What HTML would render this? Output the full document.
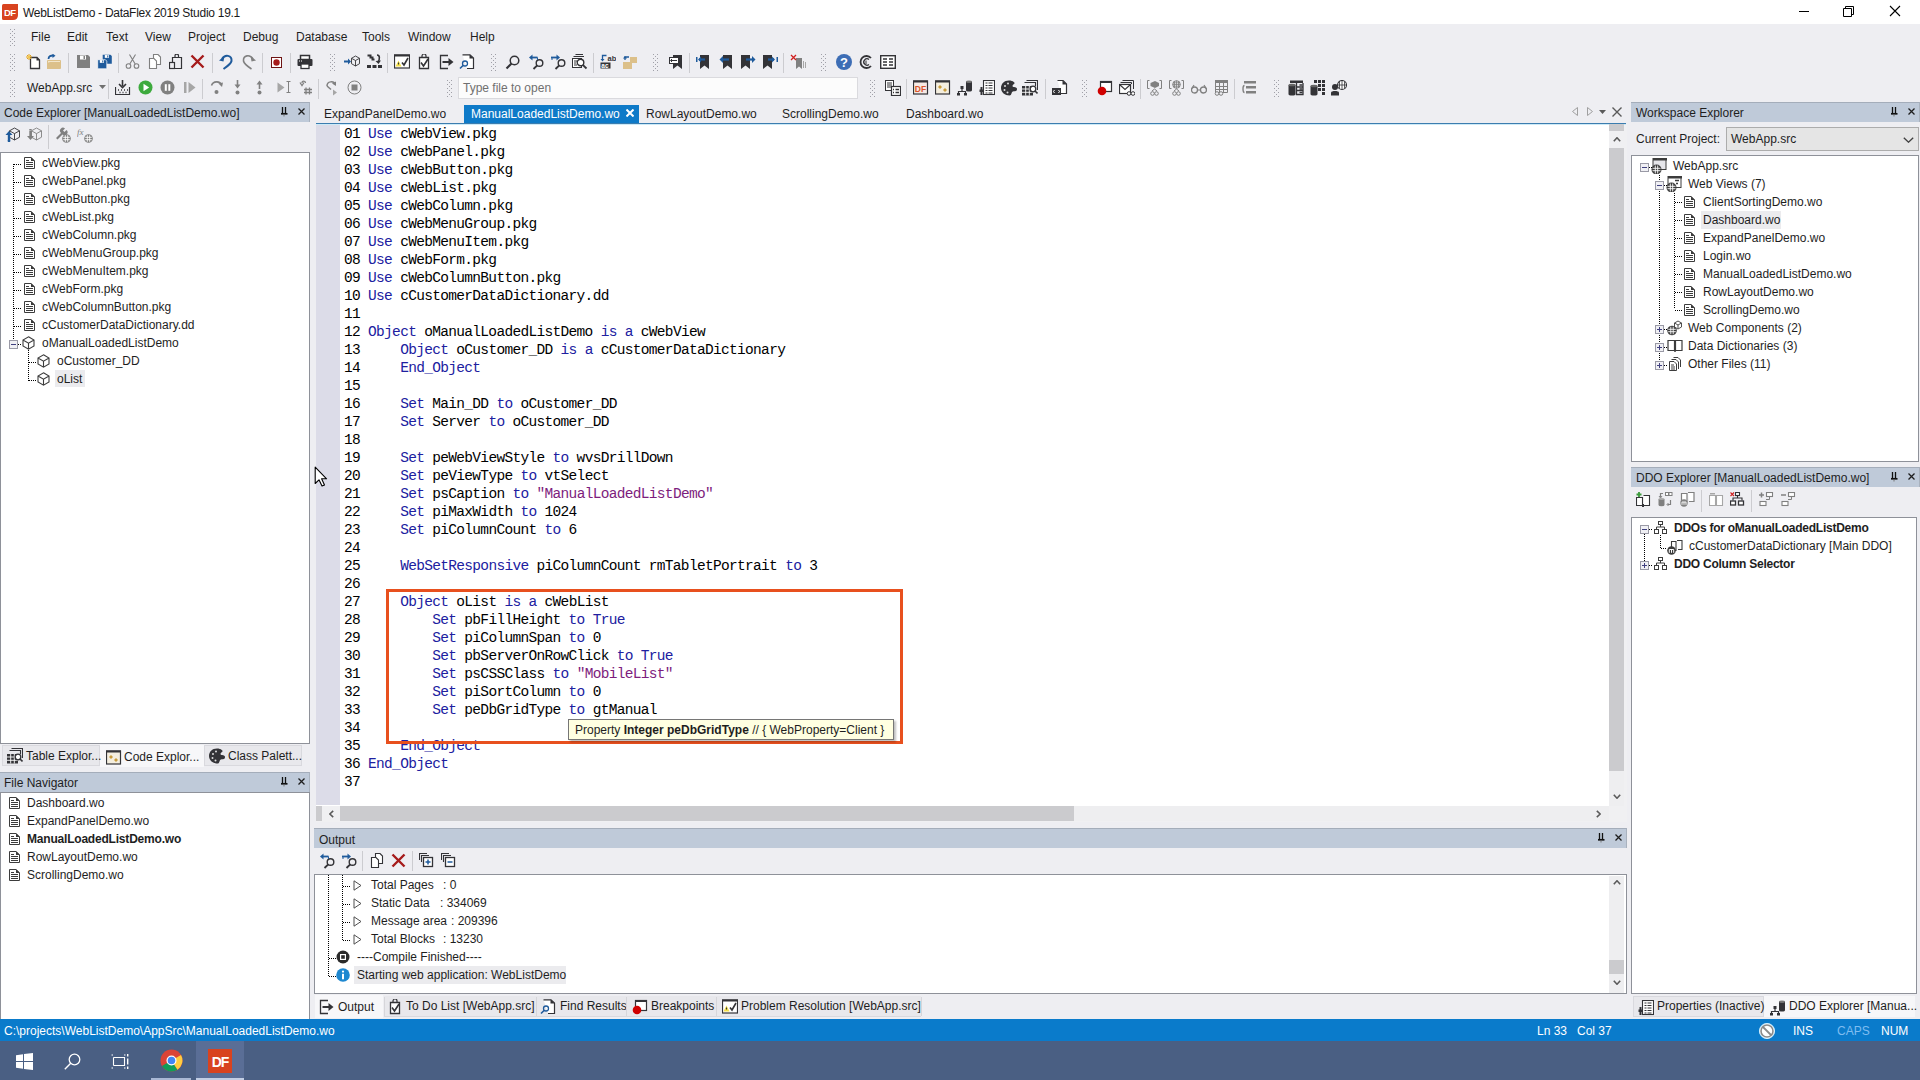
<!DOCTYPE html>
<html><head><meta charset="utf-8"><style>
*{margin:0;padding:0;box-sizing:border-box}
html,body{width:1920px;height:1080px;overflow:hidden;background:#EEEEF2;font-family:"Liberation Sans",sans-serif;font-size:12px;color:#1E1E1E}
.a{position:absolute}
.t{position:absolute;white-space:pre;line-height:14px;font-size:12px}
.hdr{position:absolute;background:#BFCAD9;border-top:1px solid #A4ADBA;border-right:1px solid #A9B2BE;height:20px}
.box{position:absolute;background:#fff;border:1px solid #8E9199}
.code{position:absolute;font-family:"Liberation Mono",monospace;font-size:14.5px;letter-spacing:-0.681px;line-height:18px;white-space:pre;color:#000}
b{font-weight:normal}
.k{color:#2020A0}
.s{color:#7D1D7D}
.bd{font-weight:bold}
</style></head><body>
<div class="a" style="left:0px;top:0px;width:1920px;height:24px;background:#fff;"></div>
<div class="t" style="left:23px;top:6px;color:#1a1a1a;letter-spacing:-0.28px">WebListDemo - DataFlex 2019 Studio 19.1</div>
<div class="a" style="left:1799px;top:11px;width:10px;height:1px;background:#000;"></div>
<svg class="a" style="left:1843px;top:5px;" width="12" height="12" viewBox="0 0 12 12"><path d="M0.5 3.5h8v8h-8z M2.5 3.5v-2h8v8h-2" fill="none" stroke="#000" stroke-width="1"/></svg>
<svg class="a" style="left:1889px;top:5px;" width="12" height="12" viewBox="0 0 12 12"><path d="M1 1L11 11M11 1L1 11" stroke="#000" stroke-width="1.1"/></svg>
<div class="t" style="left:31px;top:30px;color:#1E1E1E">File</div>
<div class="t" style="left:67px;top:30px;color:#1E1E1E">Edit</div>
<div class="t" style="left:106px;top:30px;color:#1E1E1E">Text</div>
<div class="t" style="left:145px;top:30px;color:#1E1E1E">View</div>
<div class="t" style="left:188px;top:30px;color:#1E1E1E">Project</div>
<div class="t" style="left:243px;top:30px;color:#1E1E1E">Debug</div>
<div class="t" style="left:296px;top:30px;color:#1E1E1E">Database</div>
<div class="t" style="left:362px;top:30px;color:#1E1E1E">Tools</div>
<div class="t" style="left:408px;top:30px;color:#1E1E1E">Window</div>
<div class="t" style="left:470px;top:30px;color:#1E1E1E">Help</div>
<div class="a" style="left:0px;top:1019px;width:1920px;height:22px;background:#0A7BCB;"></div>
<div class="t" style="left:4px;top:1024px;color:#fff">C:\projects\WebListDemo\AppSrc\ManualLoadedListDemo.wo</div>
<div class="t" style="left:1537px;top:1024px;color:#fff">Ln 33</div>
<div class="t" style="left:1577px;top:1024px;color:#fff">Col 37</div>
<div class="t" style="left:1793px;top:1024px;color:#fff">INS</div>
<div class="t" style="left:1837px;top:1024px;color:#7FBDF0">CAPS</div>
<div class="t" style="left:1881px;top:1024px;color:#fff">NUM</div>
<div class="a" style="left:0px;top:1041px;width:1920px;height:39px;background:#4A5F83;"></div>
<div class="hdr" style="left:0;top:102px;width:310px"></div>
<div class="t" style="left:4px;top:106px;">Code Explorer [ManualLoadedListDemo.wo]</div>
<div class="box" style="left:0;top:152px;width:310px;height:592px"></div>
<div class="t" style="left:42px;top:156px;">cWebView.pkg</div>
<div class="t" style="left:42px;top:174px;">cWebPanel.pkg</div>
<div class="t" style="left:42px;top:192px;">cWebButton.pkg</div>
<div class="t" style="left:42px;top:210px;">cWebList.pkg</div>
<div class="t" style="left:42px;top:228px;">cWebColumn.pkg</div>
<div class="t" style="left:42px;top:246px;">cWebMenuGroup.pkg</div>
<div class="t" style="left:42px;top:264px;">cWebMenuItem.pkg</div>
<div class="t" style="left:42px;top:282px;">cWebForm.pkg</div>
<div class="t" style="left:42px;top:300px;">cWebColumnButton.pkg</div>
<div class="t" style="left:42px;top:318px;">cCustomerDataDictionary.dd</div>
<div class="t" style="left:42px;top:336px;">oManualLoadedListDemo</div>
<div class="t" style="left:57px;top:354px;">oCustomer_DD</div>
<div class="a" style="left:55px;top:370px;width:30px;height:17px;background:#EBEBEE;"></div>
<div class="t" style="left:57px;top:372px;">oList</div>
<div class="a" style="left:2px;top:745px;width:98px;height:21px;background:#E8E8EC;border:1px solid #D9D9DE"></div>
<div class="a" style="left:100px;top:745px;width:104px;height:22px;background:#F7F7F9;"></div>
<div class="a" style="left:204px;top:745px;width:98px;height:21px;background:#E8E8EC;border:1px solid #D9D9DE"></div>
<div class="t" style="left:26px;top:749px;">Table Explor...</div>
<div class="t" style="left:124px;top:750px;">Code Explor...</div>
<div class="t" style="left:228px;top:749px;">Class Palett...</div>
<div class="hdr" style="left:0;top:772px;width:310px"></div>
<div class="t" style="left:4px;top:776px;">File Navigator</div>
<div class="box" style="left:0;top:792px;width:310px;height:227px;border-bottom:none"></div>
<div class="t" style="left:27px;top:796px;">Dashboard.wo</div>
<div class="t" style="left:27px;top:814px;">ExpandPanelDemo.wo</div>
<div class="t" style="left:27px;top:832px;font-weight:bold;letter-spacing:-0.2px">ManualLoadedListDemo.wo</div>
<div class="t" style="left:27px;top:850px;">RowLayoutDemo.wo</div>
<div class="t" style="left:27px;top:868px;">ScrollingDemo.wo</div>
<div class="t" style="left:324px;top:107px;">ExpandPanelDemo.wo</div>
<div class="a" style="left:464px;top:105px;width:175px;height:18px;background:#0E7AC8;"></div>
<div class="t" style="left:471px;top:107px;color:#fff">ManualLoadedListDemo.wo</div>
<div class="t" style="left:646px;top:107px;">RowLayoutDemo.wo</div>
<div class="t" style="left:782px;top:107px;">ScrollingDemo.wo</div>
<div class="t" style="left:906px;top:107px;">Dashboard.wo</div>
<div class="a" style="left:316px;top:123px;width:1310px;height:1px;background:#3C7DAF;"></div>
<div class="a" style="left:316px;top:124px;width:1293px;height:682px;background:#fff;"></div>
<div class="a" style="left:1624px;top:124px;width:3px;height:698px;background:#F0F0F2;"></div>
<div class="a" style="left:316px;top:124px;width:1310px;height:1px;background:#CDEAF7;"></div>
<div class="a" style="left:316px;top:125px;width:24px;height:680px;background:#DCDCE8;"></div>
<div class="code" style="left:344px;top:125px">01 <b class="k">Use</b> cWebView.pkg
02 <b class="k">Use</b> cWebPanel.pkg
03 <b class="k">Use</b> cWebButton.pkg
04 <b class="k">Use</b> cWebList.pkg
05 <b class="k">Use</b> cWebColumn.pkg
06 <b class="k">Use</b> cWebMenuGroup.pkg
07 <b class="k">Use</b> cWebMenuItem.pkg
08 <b class="k">Use</b> cWebForm.pkg
09 <b class="k">Use</b> cWebColumnButton.pkg
10 <b class="k">Use</b> cCustomerDataDictionary.dd
11
12 <b class="k">Object</b> oManualLoadedListDemo <b class="k">is</b> <b class="k">a</b> cWebView
13     <b class="k">Object</b> oCustomer_DD <b class="k">is</b> <b class="k">a</b> cCustomerDataDictionary
14     <b class="k">End_Object</b>
15
16     <b class="k">Set</b> Main_DD <b class="k">to</b> oCustomer_DD
17     <b class="k">Set</b> Server <b class="k">to</b> oCustomer_DD
18
19     <b class="k">Set</b> peWebViewStyle <b class="k">to</b> wvsDrillDown
20     <b class="k">Set</b> peViewType <b class="k">to</b> vtSelect
21     <b class="k">Set</b> psCaption <b class="k">to</b> <b class="s">"ManualLoadedListDemo"</b>
22     <b class="k">Set</b> piMaxWidth <b class="k">to</b> 1024
23     <b class="k">Set</b> piColumnCount <b class="k">to</b> 6
24
25     <b class="k">WebSetResponsive</b> piColumnCount rmTabletPortrait <b class="k">to</b> 3
26
27     <b class="k">Object</b> oList <b class="k">is</b> <b class="k">a</b> cWebList
28         <b class="k">Set</b> pbFillHeight <b class="k">to</b> <b class="k">True</b>
29         <b class="k">Set</b> piColumnSpan <b class="k">to</b> 0
30         <b class="k">Set</b> pbServerOnRowClick <b class="k">to</b> <b class="k">True</b>
31         <b class="k">Set</b> psCSSClass <b class="k">to</b> <b class="s">"MobileList"</b>
32         <b class="k">Set</b> piSortColumn <b class="k">to</b> 0
33         <b class="k">Set</b> peDbGridType <b class="k">to</b> gtManual
34
35     <b class="k">End_Object</b>
36 <b class="k">End_Object</b>
37
</div>
<div class="a" style="left:1609px;top:124px;width:15px;height:682px;background:#EEEEF0;"></div>
<div class="a" style="left:1609px;top:148px;width:15px;height:623px;background:#CBCBCE;"></div>
<div class="a" style="left:1609px;top:124px;width:15px;height:7px;background:#CBCBCE;"></div>
<div class="a" style="left:1609px;top:131px;width:15px;height:17px;background:#F0F0F2;"></div>
<div class="a" style="left:316px;top:806px;width:1311px;height:16px;background:#F0F0F2;"></div>
<div class="a" style="left:340px;top:806px;width:1269px;height:15px;background:#EEEEF0;"></div>
<div class="a" style="left:340px;top:806px;width:734px;height:15px;background:#CBCBCE;"></div>
<div class="a" style="left:316px;top:806px;width:24px;height:15px;background:#F0F0F2;"></div>
<div class="a" style="left:316px;top:806px;width:6px;height:15px;background:#CBCBCE;"></div>
<div class="a" style="left:386px;top:589px;width:517px;height:155px;border:3px solid #E8501E"></div>
<div class="a" style="left:568px;top:719px;width:326px;height:21px;background:#FFFFE1;border:1px solid #767676;box-shadow:2px 2px 2px rgba(0,0,0,0.25)"></div>
<div class="t" style="left:575px;top:723px;">Property <span class="bd">Integer peDbGridType</span> // { WebProperty=Client }</div>
<div class="hdr" style="left:314px;top:828px;width:1313px"></div>
<div class="t" style="left:319px;top:833px;">Output</div>
<div class="box" style="left:314px;top:874px;width:1313px;height:120px"></div>
<div class="t" style="left:371px;top:878px;">Total Pages</div>
<div class="t" style="left:443px;top:878px;">: 0</div>
<div class="t" style="left:371px;top:896px;">Static Data</div>
<div class="t" style="left:440px;top:896px;">: 334069</div>
<div class="t" style="left:371px;top:914px;">Message area</div>
<div class="t" style="left:451px;top:914px;">: 209396</div>
<div class="t" style="left:371px;top:932px;">Total Blocks</div>
<div class="t" style="left:443px;top:932px;">: 13230</div>
<div class="t" style="left:357px;top:950px;">----Compile Finished----</div>
<div class="a" style="left:354px;top:966px;width:212px;height:18px;background:#EBEBEE;"></div>
<div class="t" style="left:357px;top:968px;">Starting web application: WebListDemo</div>
<div class="a" style="left:1609px;top:876px;width:15px;height:117px;background:#EEEEF0;"></div>
<div class="a" style="left:1609px;top:960px;width:15px;height:14px;background:#CBCBCE;"></div>
<div class="a" style="left:315px;top:995px;width:68px;height:23px;background:#F7F7F9;"></div>
<div class="a" style="left:384px;top:996px;width:152px;height:21px;background:#E8E8EC;border-bottom:1px solid #D9D9DE"></div>
<div class="a" style="left:536px;top:996px;width:90px;height:21px;background:#E8E8EC;border-bottom:1px solid #D9D9DE"></div>
<div class="a" style="left:626px;top:996px;width:90px;height:21px;background:#E8E8EC;border-bottom:1px solid #D9D9DE"></div>
<div class="a" style="left:716px;top:996px;width:205px;height:21px;background:#E8E8EC;border-bottom:1px solid #D9D9DE"></div>
<div class="t" style="left:338px;top:1000px;">Output</div>
<div class="t" style="left:406px;top:999px;">To Do List [WebApp.src]</div>
<div class="t" style="left:560px;top:999px;">Find Results</div>
<div class="t" style="left:651px;top:999px;">Breakpoints</div>
<div class="t" style="left:741px;top:999px;">Problem Resolution [WebApp.src]</div>
<div class="hdr" style="left:1631px;top:102px;width:289px"></div>
<div class="t" style="left:1636px;top:106px;">Workspace Explorer</div>
<div class="t" style="left:1636px;top:132px;">Current Project:</div>
<div class="a" style="left:1726px;top:127px;width:193px;height:24px;background:#E5E5E5;border:1px solid #ACACAC"></div>
<div class="t" style="left:1731px;top:132px;">WebApp.src</div>
<div class="box" style="left:1631px;top:155px;width:288px;height:307px"></div>
<div class="t" style="left:1673px;top:159px;">WebApp.src</div>
<div class="t" style="left:1688px;top:177px;">Web Views (7)</div>
<div class="t" style="left:1703px;top:195px;">ClientSortingDemo.wo</div>
<div class="a" style="left:1701px;top:211px;width:80px;height:18px;background:#EBEBEE;"></div>
<div class="t" style="left:1703px;top:213px;">Dashboard.wo</div>
<div class="t" style="left:1703px;top:231px;">ExpandPanelDemo.wo</div>
<div class="t" style="left:1703px;top:249px;">Login.wo</div>
<div class="t" style="left:1703px;top:267px;">ManualLoadedListDemo.wo</div>
<div class="t" style="left:1703px;top:285px;">RowLayoutDemo.wo</div>
<div class="t" style="left:1703px;top:303px;">ScrollingDemo.wo</div>
<div class="t" style="left:1688px;top:321px;">Web Components (2)</div>
<div class="t" style="left:1688px;top:339px;">Data Dictionaries (3)</div>
<div class="t" style="left:1688px;top:357px;">Other Files (11)</div>
<div class="hdr" style="left:1631px;top:467px;width:289px"></div>
<div class="t" style="left:1636px;top:471px;">DDO Explorer [ManualLoadedListDemo.wo]</div>
<div class="box" style="left:1631px;top:517px;width:286px;height:477px"></div>
<div class="t" style="left:1674px;top:521px;font-weight:bold;letter-spacing:-0.25px">DDOs for oManualLoadedListDemo</div>
<div class="t" style="left:1689px;top:539px;">cCustomerDataDictionary [Main DDO]</div>
<div class="t" style="left:1674px;top:557px;font-weight:bold;letter-spacing:-0.25px">DDO Column Selector</div>
<div class="a" style="left:1633px;top:996px;width:131px;height:21px;background:#E8E8EC;border:1px solid #D9D9DE"></div>
<div class="a" style="left:1764px;top:996px;width:151px;height:21px;background:#F7F7F9;"></div>
<div class="t" style="left:1657px;top:999px;">Properties (Inactive)</div>
<div class="t" style="left:1789px;top:999px;">DDO Explorer [Manua...</div>
<svg class="a" style="left:13px;top:164px;" width="1" height="177" viewBox="0 0 1 177"><path d="M0.5 0V177" stroke="#000" stroke-dasharray="1 1"/></svg>
<svg class="a" style="left:14px;top:164px;" width="7" height="1" viewBox="0 0 7 1"><path d="M0 0.5H7" stroke="#000" stroke-dasharray="1 1"/></svg>
<svg class="a" style="left:24px;top:157px;" width="11" height="12" viewBox="0 0 11 12"><path d="M0.5 0.5H7L10.5 4V11.5H0.5Z" fill="#fff" stroke="#3C3C3C"/><path d="M7 0L11 4H7Z" fill="#3C3C3C"/><path d="M2 3.5h3M2 5.5h7M2 7.5h7M2 9.5h7" stroke="#3C3C3C"/></svg>
<svg class="a" style="left:14px;top:182px;" width="7" height="1" viewBox="0 0 7 1"><path d="M0 0.5H7" stroke="#000" stroke-dasharray="1 1"/></svg>
<svg class="a" style="left:24px;top:175px;" width="11" height="12" viewBox="0 0 11 12"><path d="M0.5 0.5H7L10.5 4V11.5H0.5Z" fill="#fff" stroke="#3C3C3C"/><path d="M7 0L11 4H7Z" fill="#3C3C3C"/><path d="M2 3.5h3M2 5.5h7M2 7.5h7M2 9.5h7" stroke="#3C3C3C"/></svg>
<svg class="a" style="left:14px;top:200px;" width="7" height="1" viewBox="0 0 7 1"><path d="M0 0.5H7" stroke="#000" stroke-dasharray="1 1"/></svg>
<svg class="a" style="left:24px;top:193px;" width="11" height="12" viewBox="0 0 11 12"><path d="M0.5 0.5H7L10.5 4V11.5H0.5Z" fill="#fff" stroke="#3C3C3C"/><path d="M7 0L11 4H7Z" fill="#3C3C3C"/><path d="M2 3.5h3M2 5.5h7M2 7.5h7M2 9.5h7" stroke="#3C3C3C"/></svg>
<svg class="a" style="left:14px;top:218px;" width="7" height="1" viewBox="0 0 7 1"><path d="M0 0.5H7" stroke="#000" stroke-dasharray="1 1"/></svg>
<svg class="a" style="left:24px;top:211px;" width="11" height="12" viewBox="0 0 11 12"><path d="M0.5 0.5H7L10.5 4V11.5H0.5Z" fill="#fff" stroke="#3C3C3C"/><path d="M7 0L11 4H7Z" fill="#3C3C3C"/><path d="M2 3.5h3M2 5.5h7M2 7.5h7M2 9.5h7" stroke="#3C3C3C"/></svg>
<svg class="a" style="left:14px;top:236px;" width="7" height="1" viewBox="0 0 7 1"><path d="M0 0.5H7" stroke="#000" stroke-dasharray="1 1"/></svg>
<svg class="a" style="left:24px;top:229px;" width="11" height="12" viewBox="0 0 11 12"><path d="M0.5 0.5H7L10.5 4V11.5H0.5Z" fill="#fff" stroke="#3C3C3C"/><path d="M7 0L11 4H7Z" fill="#3C3C3C"/><path d="M2 3.5h3M2 5.5h7M2 7.5h7M2 9.5h7" stroke="#3C3C3C"/></svg>
<svg class="a" style="left:14px;top:254px;" width="7" height="1" viewBox="0 0 7 1"><path d="M0 0.5H7" stroke="#000" stroke-dasharray="1 1"/></svg>
<svg class="a" style="left:24px;top:247px;" width="11" height="12" viewBox="0 0 11 12"><path d="M0.5 0.5H7L10.5 4V11.5H0.5Z" fill="#fff" stroke="#3C3C3C"/><path d="M7 0L11 4H7Z" fill="#3C3C3C"/><path d="M2 3.5h3M2 5.5h7M2 7.5h7M2 9.5h7" stroke="#3C3C3C"/></svg>
<svg class="a" style="left:14px;top:272px;" width="7" height="1" viewBox="0 0 7 1"><path d="M0 0.5H7" stroke="#000" stroke-dasharray="1 1"/></svg>
<svg class="a" style="left:24px;top:265px;" width="11" height="12" viewBox="0 0 11 12"><path d="M0.5 0.5H7L10.5 4V11.5H0.5Z" fill="#fff" stroke="#3C3C3C"/><path d="M7 0L11 4H7Z" fill="#3C3C3C"/><path d="M2 3.5h3M2 5.5h7M2 7.5h7M2 9.5h7" stroke="#3C3C3C"/></svg>
<svg class="a" style="left:14px;top:290px;" width="7" height="1" viewBox="0 0 7 1"><path d="M0 0.5H7" stroke="#000" stroke-dasharray="1 1"/></svg>
<svg class="a" style="left:24px;top:283px;" width="11" height="12" viewBox="0 0 11 12"><path d="M0.5 0.5H7L10.5 4V11.5H0.5Z" fill="#fff" stroke="#3C3C3C"/><path d="M7 0L11 4H7Z" fill="#3C3C3C"/><path d="M2 3.5h3M2 5.5h7M2 7.5h7M2 9.5h7" stroke="#3C3C3C"/></svg>
<svg class="a" style="left:14px;top:308px;" width="7" height="1" viewBox="0 0 7 1"><path d="M0 0.5H7" stroke="#000" stroke-dasharray="1 1"/></svg>
<svg class="a" style="left:24px;top:301px;" width="11" height="12" viewBox="0 0 11 12"><path d="M0.5 0.5H7L10.5 4V11.5H0.5Z" fill="#fff" stroke="#3C3C3C"/><path d="M7 0L11 4H7Z" fill="#3C3C3C"/><path d="M2 3.5h3M2 5.5h7M2 7.5h7M2 9.5h7" stroke="#3C3C3C"/></svg>
<svg class="a" style="left:14px;top:326px;" width="7" height="1" viewBox="0 0 7 1"><path d="M0 0.5H7" stroke="#000" stroke-dasharray="1 1"/></svg>
<svg class="a" style="left:24px;top:319px;" width="11" height="12" viewBox="0 0 11 12"><path d="M0.5 0.5H7L10.5 4V11.5H0.5Z" fill="#fff" stroke="#3C3C3C"/><path d="M7 0L11 4H7Z" fill="#3C3C3C"/><path d="M2 3.5h3M2 5.5h7M2 7.5h7M2 9.5h7" stroke="#3C3C3C"/></svg>
<svg class="a" style="left:9px;top:340px;" width="9" height="9" viewBox="0 0 9 9"><rect x="0.5" y="0.5" width="8" height="8" fill="#F0F0F4" stroke="#9A9AA6"/><path d="M2 4.5h5" stroke="#404080"/></svg>
<svg class="a" style="left:18px;top:344px;" width="4" height="1" viewBox="0 0 4 1"><path d="M0 0.5H4" stroke="#000" stroke-dasharray="1 1"/></svg>
<svg class="a" style="left:22px;top:336px;" width="13" height="14" viewBox="0 0 13 14"><path d="M6.5 0.8L12 4V10L6.5 13.2L1 10V4Z M1 4L6.5 7.2L12 4 M6.5 7.2V13.2" fill="none" stroke="#3C3C3C" stroke-width="1.1"/></svg>
<svg class="a" style="left:28px;top:350px;" width="1" height="31" viewBox="0 0 1 31"><path d="M0.5 0V31" stroke="#000" stroke-dasharray="1 1"/></svg>
<svg class="a" style="left:29px;top:362px;" width="7" height="1" viewBox="0 0 7 1"><path d="M0 0.5H7" stroke="#000" stroke-dasharray="1 1"/></svg>
<svg class="a" style="left:29px;top:380px;" width="7" height="1" viewBox="0 0 7 1"><path d="M0 0.5H7" stroke="#000" stroke-dasharray="1 1"/></svg>
<svg class="a" style="left:37px;top:354px;" width="13" height="14" viewBox="0 0 13 14"><path d="M6.5 0.8L12 4V10L6.5 13.2L1 10V4Z M1 4L6.5 7.2L12 4 M6.5 7.2V13.2" fill="none" stroke="#3C3C3C" stroke-width="1.1"/></svg>
<svg class="a" style="left:37px;top:372px;" width="13" height="14" viewBox="0 0 13 14"><path d="M6.5 0.8L12 4V10L6.5 13.2L1 10V4Z M1 4L6.5 7.2L12 4 M6.5 7.2V13.2" fill="none" stroke="#3C3C3C" stroke-width="1.1"/></svg>
<svg class="a" style="left:9px;top:797px;" width="11" height="12" viewBox="0 0 11 12"><path d="M0.5 0.5H7L10.5 4V11.5H0.5Z" fill="#fff" stroke="#3C3C3C"/><path d="M7 0L11 4H7Z" fill="#3C3C3C"/><path d="M2 3.5h3M2 5.5h7M2 7.5h7M2 9.5h7" stroke="#3C3C3C"/></svg>
<svg class="a" style="left:9px;top:815px;" width="11" height="12" viewBox="0 0 11 12"><path d="M0.5 0.5H7L10.5 4V11.5H0.5Z" fill="#fff" stroke="#3C3C3C"/><path d="M7 0L11 4H7Z" fill="#3C3C3C"/><path d="M2 3.5h3M2 5.5h7M2 7.5h7M2 9.5h7" stroke="#3C3C3C"/></svg>
<svg class="a" style="left:9px;top:833px;" width="11" height="12" viewBox="0 0 11 12"><path d="M0.5 0.5H7L10.5 4V11.5H0.5Z" fill="#fff" stroke="#3C3C3C"/><path d="M7 0L11 4H7Z" fill="#3C3C3C"/><path d="M2 3.5h3M2 5.5h7M2 7.5h7M2 9.5h7" stroke="#3C3C3C"/></svg>
<svg class="a" style="left:9px;top:851px;" width="11" height="12" viewBox="0 0 11 12"><path d="M0.5 0.5H7L10.5 4V11.5H0.5Z" fill="#fff" stroke="#3C3C3C"/><path d="M7 0L11 4H7Z" fill="#3C3C3C"/><path d="M2 3.5h3M2 5.5h7M2 7.5h7M2 9.5h7" stroke="#3C3C3C"/></svg>
<svg class="a" style="left:9px;top:869px;" width="11" height="12" viewBox="0 0 11 12"><path d="M0.5 0.5H7L10.5 4V11.5H0.5Z" fill="#fff" stroke="#3C3C3C"/><path d="M7 0L11 4H7Z" fill="#3C3C3C"/><path d="M2 3.5h3M2 5.5h7M2 7.5h7M2 9.5h7" stroke="#3C3C3C"/></svg>
<svg class="a" style="left:1640px;top:163px;" width="9" height="9" viewBox="0 0 9 9"><rect x="0.5" y="0.5" width="8" height="8" fill="#F0F0F4" stroke="#9A9AA6"/><path d="M2 4.5h5" stroke="#404080"/></svg>
<svg class="a" style="left:1649px;top:167px;" width="3" height="1" viewBox="0 0 3 1"><path d="M0 0.5H3" stroke="#000" stroke-dasharray="1 1"/></svg>
<svg class="a" style="left:1651px;top:158px;" width="16" height="16" viewBox="0 0 16 16"><rect x="2" y="0.5" width="13" height="11" fill="#E6E6EA" stroke="#3C3C3C"/><rect x="2" y="0" width="14" height="2.5" fill="#3C3C3C"/><circle cx="5.5" cy="11.5" r="5" fill="#3C3C3C"/><path d="M1.5 10.3h8M1.5 12.7h8M4.3 7.5v8M6.7 7.5v8" stroke="#fff" stroke-width="0.9"/></svg>
<svg class="a" style="left:1659px;top:175px;" width="1" height="187" viewBox="0 0 1 187"><path d="M0.5 0V187" stroke="#000" stroke-dasharray="1 1"/></svg>
<svg class="a" style="left:1655px;top:181px;" width="9" height="9" viewBox="0 0 9 9"><rect x="0.5" y="0.5" width="8" height="8" fill="#F0F0F4" stroke="#9A9AA6"/><path d="M2 4.5h5" stroke="#404080"/></svg>
<svg class="a" style="left:1664px;top:185px;" width="3" height="1" viewBox="0 0 3 1"><path d="M0 0.5H3" stroke="#000" stroke-dasharray="1 1"/></svg>
<svg class="a" style="left:1666px;top:176px;" width="16" height="16" viewBox="0 0 16 16"><rect x="2" y="0.5" width="13" height="11" fill="#fff" stroke="#3C3C3C"/><rect x="2" y="0" width="14" height="2.5" fill="#3C3C3C"/><path d="M9 4.5h4M10 7.5h2" stroke="#3C3C3C" stroke-width="1.4"/><circle cx="5.5" cy="11.5" r="5" fill="#3C3C3C"/><path d="M1.5 10.3h8M1.5 12.7h8M4.3 7.5v8M6.7 7.5v8" stroke="#fff" stroke-width="0.9"/></svg>
<svg class="a" style="left:1674px;top:193px;" width="1" height="116" viewBox="0 0 1 116"><path d="M0.5 0V116" stroke="#000" stroke-dasharray="1 1"/></svg>
<svg class="a" style="left:1675px;top:202px;" width="7" height="1" viewBox="0 0 7 1"><path d="M0 0.5H7" stroke="#000" stroke-dasharray="1 1"/></svg>
<svg class="a" style="left:1684px;top:196px;" width="11" height="12" viewBox="0 0 11 12"><path d="M0.5 0.5H7L10.5 4V11.5H0.5Z" fill="#fff" stroke="#3C3C3C"/><path d="M7 0L11 4H7Z" fill="#3C3C3C"/><path d="M2 3.5h3M2 5.5h7M2 7.5h7M2 9.5h7" stroke="#3C3C3C"/></svg>
<svg class="a" style="left:1675px;top:220px;" width="7" height="1" viewBox="0 0 7 1"><path d="M0 0.5H7" stroke="#000" stroke-dasharray="1 1"/></svg>
<svg class="a" style="left:1684px;top:214px;" width="11" height="12" viewBox="0 0 11 12"><path d="M0.5 0.5H7L10.5 4V11.5H0.5Z" fill="#fff" stroke="#3C3C3C"/><path d="M7 0L11 4H7Z" fill="#3C3C3C"/><path d="M2 3.5h3M2 5.5h7M2 7.5h7M2 9.5h7" stroke="#3C3C3C"/></svg>
<svg class="a" style="left:1675px;top:238px;" width="7" height="1" viewBox="0 0 7 1"><path d="M0 0.5H7" stroke="#000" stroke-dasharray="1 1"/></svg>
<svg class="a" style="left:1684px;top:232px;" width="11" height="12" viewBox="0 0 11 12"><path d="M0.5 0.5H7L10.5 4V11.5H0.5Z" fill="#fff" stroke="#3C3C3C"/><path d="M7 0L11 4H7Z" fill="#3C3C3C"/><path d="M2 3.5h3M2 5.5h7M2 7.5h7M2 9.5h7" stroke="#3C3C3C"/></svg>
<svg class="a" style="left:1675px;top:256px;" width="7" height="1" viewBox="0 0 7 1"><path d="M0 0.5H7" stroke="#000" stroke-dasharray="1 1"/></svg>
<svg class="a" style="left:1684px;top:250px;" width="11" height="12" viewBox="0 0 11 12"><path d="M0.5 0.5H7L10.5 4V11.5H0.5Z" fill="#fff" stroke="#3C3C3C"/><path d="M7 0L11 4H7Z" fill="#3C3C3C"/><path d="M2 3.5h3M2 5.5h7M2 7.5h7M2 9.5h7" stroke="#3C3C3C"/></svg>
<svg class="a" style="left:1675px;top:274px;" width="7" height="1" viewBox="0 0 7 1"><path d="M0 0.5H7" stroke="#000" stroke-dasharray="1 1"/></svg>
<svg class="a" style="left:1684px;top:268px;" width="11" height="12" viewBox="0 0 11 12"><path d="M0.5 0.5H7L10.5 4V11.5H0.5Z" fill="#fff" stroke="#3C3C3C"/><path d="M7 0L11 4H7Z" fill="#3C3C3C"/><path d="M2 3.5h3M2 5.5h7M2 7.5h7M2 9.5h7" stroke="#3C3C3C"/></svg>
<svg class="a" style="left:1675px;top:292px;" width="7" height="1" viewBox="0 0 7 1"><path d="M0 0.5H7" stroke="#000" stroke-dasharray="1 1"/></svg>
<svg class="a" style="left:1684px;top:286px;" width="11" height="12" viewBox="0 0 11 12"><path d="M0.5 0.5H7L10.5 4V11.5H0.5Z" fill="#fff" stroke="#3C3C3C"/><path d="M7 0L11 4H7Z" fill="#3C3C3C"/><path d="M2 3.5h3M2 5.5h7M2 7.5h7M2 9.5h7" stroke="#3C3C3C"/></svg>
<svg class="a" style="left:1675px;top:310px;" width="7" height="1" viewBox="0 0 7 1"><path d="M0 0.5H7" stroke="#000" stroke-dasharray="1 1"/></svg>
<svg class="a" style="left:1684px;top:304px;" width="11" height="12" viewBox="0 0 11 12"><path d="M0.5 0.5H7L10.5 4V11.5H0.5Z" fill="#fff" stroke="#3C3C3C"/><path d="M7 0L11 4H7Z" fill="#3C3C3C"/><path d="M2 3.5h3M2 5.5h7M2 7.5h7M2 9.5h7" stroke="#3C3C3C"/></svg>
<svg class="a" style="left:1655px;top:325px;" width="9" height="9" viewBox="0 0 9 9"><rect x="0.5" y="0.5" width="8" height="8" fill="#F0F0F4" stroke="#9A9AA6"/><path d="M2 4.5h5" stroke="#404080"/><path d="M4.5 2v5" stroke="#404080"/></svg>
<svg class="a" style="left:1664px;top:329px;" width="3" height="1" viewBox="0 0 3 1"><path d="M0 0.5H3" stroke="#000" stroke-dasharray="1 1"/></svg>
<svg class="a" style="left:1655px;top:343px;" width="9" height="9" viewBox="0 0 9 9"><rect x="0.5" y="0.5" width="8" height="8" fill="#F0F0F4" stroke="#9A9AA6"/><path d="M2 4.5h5" stroke="#404080"/><path d="M4.5 2v5" stroke="#404080"/></svg>
<svg class="a" style="left:1664px;top:347px;" width="3" height="1" viewBox="0 0 3 1"><path d="M0 0.5H3" stroke="#000" stroke-dasharray="1 1"/></svg>
<svg class="a" style="left:1655px;top:361px;" width="9" height="9" viewBox="0 0 9 9"><rect x="0.5" y="0.5" width="8" height="8" fill="#F0F0F4" stroke="#9A9AA6"/><path d="M2 4.5h5" stroke="#404080"/><path d="M4.5 2v5" stroke="#404080"/></svg>
<svg class="a" style="left:1664px;top:365px;" width="3" height="1" viewBox="0 0 3 1"><path d="M0 0.5H3" stroke="#000" stroke-dasharray="1 1"/></svg>
<svg class="a" style="left:1667px;top:320px;" width="16" height="16" viewBox="0 0 16 16"><circle cx="5" cy="10.5" r="4.8" fill="#3C3C3C"/><path d="M1.2000000000000002 9.3h7.6M1.2000000000000002 11.7h7.6M3.8 6.7v7.6M6.2 6.7v7.6" stroke="#fff" stroke-width="0.9"/><path d="M11 1L14.5 3V7L11 9L7.5 7V3Z M11 5V8.5 M7.5 3L11 5L14.5 3" fill="#fff" stroke="#3C3C3C" stroke-width="0.9"/></svg>
<svg class="a" style="left:1667px;top:339px;" width="16" height="14" viewBox="0 0 16 14"><path d="M1 1.5H7.5V11.5H1Z M8.5 1.5H15V11.5H8.5Z" fill="#fff" stroke="#3C3C3C" stroke-width="1.2"/><path d="M8 1v12" stroke="#3C3C3C" stroke-width="1.5"/></svg>
<svg class="a" style="left:1669px;top:357px;" width="12" height="14" viewBox="0 0 12 14"><path d="M4.5 0.5H9L11.5 3V10" fill="none" stroke="#3C3C3C"/><path d="M2.5 2.5H7L9.5 5V12" fill="none" stroke="#3C3C3C"/><path d="M0.5 4.5H5L7.5 7V13.5H0.5Z" fill="#fff" stroke="#3C3C3C"/><path d="M2 8h3M2 10h4M2 12h4" stroke="#3C3C3C"/></svg>
<svg class="a" style="left:1640px;top:525px;" width="9" height="9" viewBox="0 0 9 9"><rect x="0.5" y="0.5" width="8" height="8" fill="#F0F0F4" stroke="#9A9AA6"/><path d="M2 4.5h5" stroke="#404080"/></svg>
<svg class="a" style="left:1649px;top:529px;" width="3" height="1" viewBox="0 0 3 1"><path d="M0 0.5H3" stroke="#000" stroke-dasharray="1 1"/></svg>
<svg class="a" style="left:1654px;top:521px;" width="13" height="13" viewBox="0 0 13 13"><rect x="4.5" y="0.5" width="4" height="3" fill="#fff" stroke="#3C3C3C"/><path d="M6.5 3.5V6M2.5 8V6H10.5V8" fill="none" stroke="#3C3C3C"/><rect x="0.5" y="8.5" width="4" height="4" fill="#fff" stroke="#3C3C3C"/><rect x="8.5" y="8.5" width="4" height="4" fill="#fff" stroke="#3C3C3C"/></svg>
<svg class="a" style="left:1644px;top:534px;" width="1" height="27" viewBox="0 0 1 27"><path d="M0.5 0V27" stroke="#000" stroke-dasharray="1 1"/></svg>
<svg class="a" style="left:1660px;top:535px;" width="1" height="13" viewBox="0 0 1 13"><path d="M0.5 0V13" stroke="#000" stroke-dasharray="1 1"/></svg>
<svg class="a" style="left:1661px;top:548px;" width="6" height="1" viewBox="0 0 6 1"><path d="M0 0.5H6" stroke="#000" stroke-dasharray="1 1"/></svg>
<svg class="a" style="left:1667px;top:540px;" width="16" height="15" viewBox="0 0 16 15"><path d="M4.5 1.5H9V10.5H4.5Z M10 0.5H15V9.5H11" fill="#fff" stroke="#3C3C3C" stroke-width="1.1"/><circle cx="4.5" cy="10.5" r="4.3" fill="#3C3C3C"/><path d="M2.3 12.8V9.5h4.4v3.3M4.5 9.5v3.3" fill="none" stroke="#fff" stroke-width="1"/></svg>
<svg class="a" style="left:1640px;top:561px;" width="9" height="9" viewBox="0 0 9 9"><rect x="0.5" y="0.5" width="8" height="8" fill="#F0F0F4" stroke="#9A9AA6"/><path d="M2 4.5h5" stroke="#404080"/><path d="M4.5 2v5" stroke="#404080"/></svg>
<svg class="a" style="left:1649px;top:565px;" width="3" height="1" viewBox="0 0 3 1"><path d="M0 0.5H3" stroke="#000" stroke-dasharray="1 1"/></svg>
<svg class="a" style="left:1654px;top:557px;" width="13" height="13" viewBox="0 0 13 13"><rect x="4.5" y="0.5" width="4" height="3" fill="#fff" stroke="#3C3C3C"/><path d="M6.5 3.5V6M2.5 8V6H10.5V8" fill="none" stroke="#3C3C3C"/><rect x="0.5" y="8.5" width="4" height="4" fill="#fff" stroke="#3C3C3C"/><rect x="8.5" y="8.5" width="4" height="4" fill="#fff" stroke="#3C3C3C"/></svg>
<svg class="a" style="left:328px;top:875px;" width="1" height="102" viewBox="0 0 1 102"><path d="M0.5 0V102" stroke="#000" stroke-dasharray="1 1"/></svg>
<svg class="a" style="left:342px;top:875px;" width="1" height="66" viewBox="0 0 1 66"><path d="M0.5 0V66" stroke="#000" stroke-dasharray="1 1"/></svg>
<svg class="a" style="left:343px;top:886px;" width="7" height="1" viewBox="0 0 7 1"><path d="M0 0.5H7" stroke="#000" stroke-dasharray="1 1"/></svg>
<svg class="a" style="left:353px;top:880px;" width="9" height="11" viewBox="0 0 9 11"><path d="M1 0.8L8 5.5L1 10.2Z" fill="#fff" stroke="#505050"/></svg>
<svg class="a" style="left:343px;top:904px;" width="7" height="1" viewBox="0 0 7 1"><path d="M0 0.5H7" stroke="#000" stroke-dasharray="1 1"/></svg>
<svg class="a" style="left:353px;top:898px;" width="9" height="11" viewBox="0 0 9 11"><path d="M1 0.8L8 5.5L1 10.2Z" fill="#fff" stroke="#505050"/></svg>
<svg class="a" style="left:343px;top:922px;" width="7" height="1" viewBox="0 0 7 1"><path d="M0 0.5H7" stroke="#000" stroke-dasharray="1 1"/></svg>
<svg class="a" style="left:353px;top:916px;" width="9" height="11" viewBox="0 0 9 11"><path d="M1 0.8L8 5.5L1 10.2Z" fill="#fff" stroke="#505050"/></svg>
<svg class="a" style="left:343px;top:940px;" width="7" height="1" viewBox="0 0 7 1"><path d="M0 0.5H7" stroke="#000" stroke-dasharray="1 1"/></svg>
<svg class="a" style="left:353px;top:934px;" width="9" height="11" viewBox="0 0 9 11"><path d="M1 0.8L8 5.5L1 10.2Z" fill="#fff" stroke="#505050"/></svg>
<svg class="a" style="left:329px;top:958px;" width="7" height="1" viewBox="0 0 7 1"><path d="M0 0.5H7" stroke="#000" stroke-dasharray="1 1"/></svg>
<svg class="a" style="left:329px;top:976px;" width="7" height="1" viewBox="0 0 7 1"><path d="M0 0.5H7" stroke="#000" stroke-dasharray="1 1"/></svg>
<svg class="a" style="left:336px;top:950px;" width="14" height="14" viewBox="0 0 14 14"><circle cx="7" cy="7" r="6.5" fill="#2A2A2A"/><rect x="4" y="4" width="6" height="6" fill="#fff"/><rect x="5.2" y="5.2" width="3.6" height="3.6" fill="#2A2A2A"/></svg>
<svg class="a" style="left:336px;top:968px;" width="14" height="14" viewBox="0 0 14 14"><circle cx="7" cy="7" r="6.8" fill="#1E88D0"/><rect x="6" y="5.8" width="2" height="5.5" fill="#fff"/><circle cx="7" cy="3.6" r="1.1" fill="#fff"/></svg>
<svg class="a" style="left:10px;top:29px;" width="5" height="18" viewBox="0 0 5 18"><rect x="0" y="0" width="1" height="1" fill="#A0A0A8"/><rect x="4" y="0" width="1" height="1" fill="#A0A0A8"/><rect x="2" y="2" width="1" height="1" fill="#A0A0A8"/><rect x="0" y="4" width="1" height="1" fill="#A0A0A8"/><rect x="4" y="4" width="1" height="1" fill="#A0A0A8"/><rect x="2" y="6" width="1" height="1" fill="#A0A0A8"/><rect x="0" y="8" width="1" height="1" fill="#A0A0A8"/><rect x="4" y="8" width="1" height="1" fill="#A0A0A8"/><rect x="2" y="10" width="1" height="1" fill="#A0A0A8"/><rect x="0" y="12" width="1" height="1" fill="#A0A0A8"/><rect x="4" y="12" width="1" height="1" fill="#A0A0A8"/><rect x="2" y="14" width="1" height="1" fill="#A0A0A8"/><rect x="0" y="16" width="1" height="1" fill="#A0A0A8"/><rect x="4" y="16" width="1" height="1" fill="#A0A0A8"/></svg>
<svg class="a" style="left:10px;top:54px;" width="5" height="18" viewBox="0 0 5 18"><rect x="0" y="0" width="1" height="1" fill="#A0A0A8"/><rect x="4" y="0" width="1" height="1" fill="#A0A0A8"/><rect x="2" y="2" width="1" height="1" fill="#A0A0A8"/><rect x="0" y="4" width="1" height="1" fill="#A0A0A8"/><rect x="4" y="4" width="1" height="1" fill="#A0A0A8"/><rect x="2" y="6" width="1" height="1" fill="#A0A0A8"/><rect x="0" y="8" width="1" height="1" fill="#A0A0A8"/><rect x="4" y="8" width="1" height="1" fill="#A0A0A8"/><rect x="2" y="10" width="1" height="1" fill="#A0A0A8"/><rect x="0" y="12" width="1" height="1" fill="#A0A0A8"/><rect x="4" y="12" width="1" height="1" fill="#A0A0A8"/><rect x="2" y="14" width="1" height="1" fill="#A0A0A8"/><rect x="0" y="16" width="1" height="1" fill="#A0A0A8"/><rect x="4" y="16" width="1" height="1" fill="#A0A0A8"/></svg>
<svg class="a" style="left:26px;top:54px;" width="16" height="16" viewBox="0 0 16 16"><path d="M4.5 3.5H11L13.5 6V14.5H4.5Z" fill="#fff" stroke="#333337" stroke-width="1.3"/><path d="M10.5 3L14 6.5H10.5Z" fill="#333337"/><g stroke="#E3A21A" stroke-width="1"><path d="M3 0v6M0 3h6M1 1l4 4M5 1L1 5"/></g><circle cx="3" cy="3" r="1.3" fill="#F4C84A"/></svg>
<svg class="a" style="left:47px;top:54px;" width="16" height="16" viewBox="0 0 16 16"><path d="M0.5 6.5H13.5V14.5H0.5Z" fill="#F2E6CC" stroke="#DCC08A"/><path d="M0 9L3 8H14L13 15H0Z" fill="#DCC08A"/><path d="M1.5 5C1.5 2 4 1.5 6 1.5" fill="none" stroke="#1F5B9C" stroke-width="1.8"/><path d="M5.5 -0.5L8.5 1.8L5.5 4Z" fill="#1F5B9C"/></svg>
<svg class="a" style="left:76px;top:54px;" width="16" height="16" viewBox="0 0 16 16"><path d="M1 1H12L14 3V14H1Z" fill="#808080"/><rect x="4" y="1.5" width="6" height="4" fill="#fff"/><rect x="7.5" y="2" width="1.5" height="3" fill="#808080"/><rect x="3.5" y="9" width="8" height="5" fill="#808080"/></svg>
<svg class="a" style="left:97px;top:54px;" width="16" height="16" viewBox="0 0 16 16"><g transform="translate(5,0) scale(0.7)"><path d="M1 1H12L14 3V14H1Z" fill="#1F5B9C"/><rect x="4" y="1.5" width="6" height="4" fill="#fff"/><rect x="7.5" y="2" width="1.5" height="3" fill="#1F5B9C"/></g><g transform="translate(0,5) scale(0.7)"><path d="M1 1H12L14 3V14H1Z" fill="#1F5B9C" stroke="#fff" stroke-width="1"/><rect x="4" y="1.5" width="6" height="4" fill="#fff"/><rect x="7.5" y="2" width="1.5" height="3" fill="#1F5B9C"/></g></svg>
<svg class="a" style="left:125px;top:54px;" width="16" height="16" viewBox="0 0 16 16"><g fill="none" stroke="#808080" stroke-width="1.1"><circle cx="3.5" cy="12" r="2.3"/><circle cx="11.5" cy="12" r="2.3"/><path d="M4.8 10L10.5 0.5M10.2 10L4.5 0.5"/></g></svg>
<svg class="a" style="left:148px;top:54px;" width="16" height="16" viewBox="0 0 16 16"><g fill="#fff" stroke="#808080" stroke-width="1.1"><path d="M5.5 0.5H10L12.5 3V10.5H5.5Z"/><path d="M1.5 4.5H6L8.5 7V14.5H1.5Z"/></g></svg>
<svg class="a" style="left:169px;top:54px;" width="16" height="16" viewBox="0 0 16 16"><g fill="none" stroke="#333337" stroke-width="1.2"><path d="M6 14.5H12.5V3.5H3.5V8"/><path d="M6 3.5V1.8A1.5 1.5 0 0 1 9.5 1.8V3.5"/><rect x="0.5" y="8.5" width="5" height="6"/></g></svg>
<svg class="a" style="left:190px;top:54px;" width="16" height="16" viewBox="0 0 16 16"><path d="M1.5 1.5L13.5 13.5M13.5 1.5L1.5 13.5" stroke="#A61B1B" stroke-width="2.4"/></svg>
<svg class="a" style="left:219px;top:54px;" width="16" height="16" viewBox="0 0 16 16"><path d="M3 5C6 0 13 1 12.5 7C12 10 9 12 4.5 15" fill="none" stroke="#1F5B9C" stroke-width="2"/><path d="M0 6.5L5.5 2L4.5 7.5Z" fill="#1F5B9C"/></svg>
<svg class="a" style="left:241px;top:54px;" width="16" height="16" viewBox="0 0 16 16"><path d="M12 5C9 0 2 1 2.5 7C3 10 6 12 10.5 15" fill="none" stroke="#808080" stroke-width="1.6"/><path d="M15 6.5L9.5 2L10.5 7.5Z" fill="#808080"/></svg>
<svg class="a" style="left:269px;top:54px;" width="16" height="16" viewBox="0 0 16 16"><rect x="2.5" y="3.5" width="10" height="10" fill="#fff" stroke="#6E1414"/><circle cx="7.5" cy="8.5" r="3.2" fill="#A61B1B"/></svg>
<svg class="a" style="left:297px;top:54px;" width="16" height="16" viewBox="0 0 16 16"><rect x="3.5" y="1.5" width="9" height="4" fill="#fff" stroke="#333337" stroke-width="1.5"/><rect x="0.5" y="5" width="15" height="7" rx="1" fill="#333337"/><rect x="4" y="10" width="8" height="4.5" fill="#fff" stroke="#333337" stroke-width="1.3"/><rect x="2" y="6.5" width="1" height="1" fill="#fff"/><rect x="4" y="6.5" width="1" height="1" fill="#fff"/></svg>
<svg class="a" style="left:344px;top:54px;" width="16" height="16" viewBox="0 0 16 16"><path d="M0 7.5H5" stroke="#1F5B9C" stroke-width="2"/><path d="M4 4.5L7 7.5L4 10.5Z" fill="#1F5B9C"/><path d="M11.5 2L15.5 4.3V9.7L11.5 12L7.5 9.7V4.3Z M7.5 4.3L11.5 6.5L15.5 4.3 M11.5 6.5V12" fill="none" stroke="#333337" stroke-width="0.9"/></svg>
<svg class="a" style="left:367px;top:54px;" width="16" height="16" viewBox="0 0 16 16"><path d="M0.5 1.5h3v2h2v2h2" fill="none" stroke="#333337" stroke-width="2"/><path d="M10 1C13 1 13 5 11 8" fill="none" stroke="#333337" stroke-width="1.6"/><path d="M8.5 7L11.5 10L14 6.5Z" fill="#333337"/><rect x="0" y="11" width="4" height="3" fill="#333337"/><rect x="5.5" y="11" width="4" height="3" fill="#333337"/><rect x="11" y="11" width="4" height="3" fill="#333337"/></svg>
<svg class="a" style="left:394px;top:54px;" width="16" height="16" viewBox="0 0 16 16"><rect x="0.5" y="1" width="15" height="13" fill="#fff" stroke="#333337" stroke-width="1.2"/><rect x="0" y="0.5" width="16" height="2" fill="#333337"/><path d="M1.5 12.5L4.5 6.5L7.5 12.5Z" fill="#F4E04A"/><path d="M4.5 8.5v2" stroke="#333337" stroke-width="1.1"/><path d="M8 8.5L10 11L14 4" fill="none" stroke="#333337" stroke-width="1.6"/></svg>
<svg class="a" style="left:417px;top:54px;" width="16" height="16" viewBox="0 0 16 16"><path d="M2.5 3.5H11.5V14.5H2.5Z" fill="#fff" stroke="#333337" stroke-width="1.3"/><path d="M5 3.5V2A2 2 0 0 1 9 2V3.5" fill="none" stroke="#333337" stroke-width="1.2"/><path d="M4 8.5L6.5 12L11 5" fill="none" stroke="#333337" stroke-width="1.6"/></svg>
<svg class="a" style="left:439px;top:54px;" width="16" height="16" viewBox="0 0 16 16"><path d="M9 1.5H1.5V14.5H9" fill="none" stroke="#333337" stroke-width="1.3"/><path d="M3.5 8h8" stroke="#333337" stroke-width="2"/><path d="M9.5 4L14.5 8L9.5 12Z" fill="#333337"/></svg>
<svg class="a" style="left:459px;top:54px;" width="16" height="16" viewBox="0 0 16 16"><path d="M3.5 0.8H11L14.5 4V14.5H8" fill="#fff" stroke="#333337" stroke-width="1.2"/><path d="M10.5 0.5L14.8 4.5H10.5Z" fill="#333337"/><circle cx="6" cy="9.5" r="2.5" fill="none" stroke="#1F5B9C" stroke-width="1.3"/><path d="M4.3 11.3L1 14.5" stroke="#1F5B9C" stroke-width="1.6"/></svg>
<svg class="a" style="left:505px;top:54px;" width="16" height="16" viewBox="0 0 16 16"><circle cx="9.5" cy="6.5" r="4.3" fill="none" stroke="#333337" stroke-width="1.5"/><path d="M6.5 9.5L1.5 14.5" stroke="#333337" stroke-width="2.2"/></svg>
<svg class="a" style="left:529px;top:54px;" width="16" height="16" viewBox="0 0 16 16"><circle cx="10.5" cy="9" r="3.3" fill="none" stroke="#333337" stroke-width="1.4"/><path d="M8.2 11.3L4.5 15" stroke="#333337" stroke-width="1.8"/><path d="M2 3.5h6.5" stroke="#1F5B9C" stroke-width="1.8"/><path d="M0 3.5L3.5 0.5V6.5Z" fill="#1F5B9C"/><path d="M8.5 3.5V6" stroke="#1F5B9C" stroke-width="1"/></svg>
<svg class="a" style="left:551px;top:54px;" width="16" height="16" viewBox="0 0 16 16"><circle cx="10.5" cy="9" r="3.3" fill="none" stroke="#333337" stroke-width="1.4"/><path d="M8.2 11.3L4.5 15" stroke="#333337" stroke-width="1.8"/><path d="M0 3.5h6.5" stroke="#1F5B9C" stroke-width="1.8"/><path d="M9 3.5L5.5 0.5V6.5Z" fill="#1F5B9C"/><path d="M1 3.5V6" stroke="#1F5B9C" stroke-width="1"/></svg>
<svg class="a" style="left:572px;top:54px;" width="16" height="16" viewBox="0 0 16 16"><path d="M3.5 0.5H11M1.5 2.5H12" stroke="#333337" stroke-width="1"/><rect x="0.5" y="4.5" width="9" height="9" fill="#fff" stroke="#333337"/><path d="M2 7h3M2 9h2M2 11h3" stroke="#333337"/><circle cx="8.5" cy="8.5" r="3.3" fill="#fff" stroke="#333337" stroke-width="1.4"/><path d="M10.8 10.8L14.5 14.5" stroke="#333337" stroke-width="1.8"/></svg>
<svg class="a" style="left:600px;top:54px;" width="16" height="16" viewBox="0 0 16 16"><text x="7.5" y="6.5" font-family="Liberation Sans" font-size="7.5" font-weight="bold" fill="#333337">ab</text><rect x="0.5" y="8.5" width="10" height="6" fill="#333337"/><text x="1.3" y="14" font-family="Liberation Sans" font-size="6.5" font-weight="bold" fill="#fff">ac</text><path d="M6.5 1.5H2.5V6" fill="none" stroke="#1F5B9C" stroke-width="1.3"/><path d="M0.5 5h4l-2 2.5z" fill="#1F5B9C"/></svg>
<svg class="a" style="left:622px;top:54px;" width="16" height="16" viewBox="0 0 16 16"><rect x="1" y="8" width="9" height="7" fill="#DCC08A"/><rect x="8" y="3" width="7" height="6" fill="#DCC08A"/><path d="M3 6V3h4" fill="none" stroke="#1F5B9C" stroke-width="1.3"/><path d="M1 4.5l2-2.5 2 2.5z" fill="#1F5B9C"/></svg>
<svg class="a" style="left:669px;top:54px;" width="16" height="16" viewBox="0 0 16 16"><path d="M4 1H13V15L8.5 11.5L4 15Z" fill="#333337"/><rect x="0.5" y="3.5" width="9" height="6" fill="#fff" stroke="#333337"/><path d="M2 6.5h6M3 5l-1.5 1.5L3 8" fill="none" stroke="#333337"/></svg>
<svg class="a" style="left:696px;top:54px;" width="16" height="16" viewBox="0 0 16 16"><path d="M4 1H13V15L8.5 11.5L4 15Z" fill="#333337"/><rect x="0" y="3" width="1.5" height="5" fill="#1F5B9C"/><path d="M3 5.5h6" stroke="#1F5B9C" stroke-width="2.2"/><path d="M2 5.5L5 2.5V8.5Z" fill="#1F5B9C"/></svg>
<svg class="a" style="left:719px;top:54px;" width="16" height="16" viewBox="0 0 16 16"><path d="M4 1H13V15L8.5 11.5L4 15Z" fill="#333337"/><path d="M3 5.5h7" stroke="#1F5B9C" stroke-width="2.2"/><path d="M0.5 5.5L4 2V9Z" fill="#1F5B9C"/></svg>
<svg class="a" style="left:740px;top:54px;" width="16" height="16" viewBox="0 0 16 16"><path d="M1 1H10V15L5.5 11.5L1 15Z" fill="#333337"/><path d="M6 5.5h7" stroke="#1F5B9C" stroke-width="2.2"/><path d="M15.5 5.5L12 2V9Z" fill="#1F5B9C"/></svg>
<svg class="a" style="left:762px;top:54px;" width="16" height="16" viewBox="0 0 16 16"><path d="M1 1H10V15L5.5 11.5L1 15Z" fill="#333337"/><rect x="14.5" y="3" width="1.5" height="5" fill="#1F5B9C"/><path d="M6 5.5h6" stroke="#1F5B9C" stroke-width="2.2"/><path d="M13 5.5L10 2.5V8.5Z" fill="#1F5B9C"/></svg>
<svg class="a" style="left:790px;top:54px;" width="16" height="16" viewBox="0 0 16 16"><path d="M6 4H12V15L9 12.5L6 15Z" fill="#808080"/><path d="M13.5 7v7M15.5 8v6" stroke="#A6A6A6"/><path d="M1 1L6 6M6 1L1 6" stroke="#D02020" stroke-width="1.3"/></svg>
<svg class="a" style="left:836px;top:54px;" width="16" height="16" viewBox="0 0 16 16"><circle cx="8" cy="8" r="8" fill="#3D6DB5"/><text x="8" y="13" text-anchor="middle" font-family="Liberation Sans" font-size="13" font-weight="bold" fill="#fff">?</text></svg>
<svg class="a" style="left:858px;top:54px;" width="16" height="16" viewBox="0 0 16 16"><path d="M13 4A6 6 0 1 0 13 12" fill="none" stroke="#333337" stroke-width="1.8"/><path d="M11 5.5A3.2 3.2 0 1 0 11 10.5" fill="none" stroke="#333337" stroke-width="1.3"/><path d="M8 6.5v4" stroke="#333337"/></svg>
<svg class="a" style="left:880px;top:54px;" width="16" height="16" viewBox="0 0 16 16"><rect x="0.7" y="1.7" width="14.6" height="12.6" fill="#fff" stroke="#333337" stroke-width="1.4"/><path d="M3 5h4M9 5h4M3 8h4M9 8h4M3 11h4M9 11h4" stroke="#333337" stroke-width="1.4"/></svg>
<div class="a" style="left:68px;top:53px;width:1px;height:20px;background:#CCCCD0;"></div>
<div class="a" style="left:118px;top:53px;width:1px;height:20px;background:#CCCCD0;"></div>
<div class="a" style="left:212px;top:53px;width:1px;height:20px;background:#CCCCD0;"></div>
<div class="a" style="left:262px;top:53px;width:1px;height:20px;background:#CCCCD0;"></div>
<div class="a" style="left:290px;top:53px;width:1px;height:20px;background:#CCCCD0;"></div>
<div class="a" style="left:387px;top:53px;width:1px;height:20px;background:#CCCCD0;"></div>
<div class="a" style="left:593px;top:53px;width:1px;height:20px;background:#CCCCD0;"></div>
<div class="a" style="left:689px;top:53px;width:1px;height:20px;background:#CCCCD0;"></div>
<div class="a" style="left:783px;top:53px;width:1px;height:20px;background:#CCCCD0;"></div>
<svg class="a" style="left:330px;top:54px;" width="5" height="18" viewBox="0 0 5 18"><rect x="0" y="0" width="1" height="1" fill="#A0A0A8"/><rect x="4" y="0" width="1" height="1" fill="#A0A0A8"/><rect x="2" y="2" width="1" height="1" fill="#A0A0A8"/><rect x="0" y="4" width="1" height="1" fill="#A0A0A8"/><rect x="4" y="4" width="1" height="1" fill="#A0A0A8"/><rect x="2" y="6" width="1" height="1" fill="#A0A0A8"/><rect x="0" y="8" width="1" height="1" fill="#A0A0A8"/><rect x="4" y="8" width="1" height="1" fill="#A0A0A8"/><rect x="2" y="10" width="1" height="1" fill="#A0A0A8"/><rect x="0" y="12" width="1" height="1" fill="#A0A0A8"/><rect x="4" y="12" width="1" height="1" fill="#A0A0A8"/><rect x="2" y="14" width="1" height="1" fill="#A0A0A8"/><rect x="0" y="16" width="1" height="1" fill="#A0A0A8"/><rect x="4" y="16" width="1" height="1" fill="#A0A0A8"/></svg>
<svg class="a" style="left:491px;top:54px;" width="5" height="18" viewBox="0 0 5 18"><rect x="0" y="0" width="1" height="1" fill="#A0A0A8"/><rect x="4" y="0" width="1" height="1" fill="#A0A0A8"/><rect x="2" y="2" width="1" height="1" fill="#A0A0A8"/><rect x="0" y="4" width="1" height="1" fill="#A0A0A8"/><rect x="4" y="4" width="1" height="1" fill="#A0A0A8"/><rect x="2" y="6" width="1" height="1" fill="#A0A0A8"/><rect x="0" y="8" width="1" height="1" fill="#A0A0A8"/><rect x="4" y="8" width="1" height="1" fill="#A0A0A8"/><rect x="2" y="10" width="1" height="1" fill="#A0A0A8"/><rect x="0" y="12" width="1" height="1" fill="#A0A0A8"/><rect x="4" y="12" width="1" height="1" fill="#A0A0A8"/><rect x="2" y="14" width="1" height="1" fill="#A0A0A8"/><rect x="0" y="16" width="1" height="1" fill="#A0A0A8"/><rect x="4" y="16" width="1" height="1" fill="#A0A0A8"/></svg>
<svg class="a" style="left:653px;top:54px;" width="5" height="18" viewBox="0 0 5 18"><rect x="0" y="0" width="1" height="1" fill="#A0A0A8"/><rect x="4" y="0" width="1" height="1" fill="#A0A0A8"/><rect x="2" y="2" width="1" height="1" fill="#A0A0A8"/><rect x="0" y="4" width="1" height="1" fill="#A0A0A8"/><rect x="4" y="4" width="1" height="1" fill="#A0A0A8"/><rect x="2" y="6" width="1" height="1" fill="#A0A0A8"/><rect x="0" y="8" width="1" height="1" fill="#A0A0A8"/><rect x="4" y="8" width="1" height="1" fill="#A0A0A8"/><rect x="2" y="10" width="1" height="1" fill="#A0A0A8"/><rect x="0" y="12" width="1" height="1" fill="#A0A0A8"/><rect x="4" y="12" width="1" height="1" fill="#A0A0A8"/><rect x="2" y="14" width="1" height="1" fill="#A0A0A8"/><rect x="0" y="16" width="1" height="1" fill="#A0A0A8"/><rect x="4" y="16" width="1" height="1" fill="#A0A0A8"/></svg>
<svg class="a" style="left:821px;top:54px;" width="5" height="18" viewBox="0 0 5 18"><rect x="0" y="0" width="1" height="1" fill="#A0A0A8"/><rect x="4" y="0" width="1" height="1" fill="#A0A0A8"/><rect x="2" y="2" width="1" height="1" fill="#A0A0A8"/><rect x="0" y="4" width="1" height="1" fill="#A0A0A8"/><rect x="4" y="4" width="1" height="1" fill="#A0A0A8"/><rect x="2" y="6" width="1" height="1" fill="#A0A0A8"/><rect x="0" y="8" width="1" height="1" fill="#A0A0A8"/><rect x="4" y="8" width="1" height="1" fill="#A0A0A8"/><rect x="2" y="10" width="1" height="1" fill="#A0A0A8"/><rect x="0" y="12" width="1" height="1" fill="#A0A0A8"/><rect x="4" y="12" width="1" height="1" fill="#A0A0A8"/><rect x="2" y="14" width="1" height="1" fill="#A0A0A8"/><rect x="0" y="16" width="1" height="1" fill="#A0A0A8"/><rect x="4" y="16" width="1" height="1" fill="#A0A0A8"/></svg>
<svg class="a" style="left:10px;top:80px;" width="5" height="18" viewBox="0 0 5 18"><rect x="0" y="0" width="1" height="1" fill="#A0A0A8"/><rect x="4" y="0" width="1" height="1" fill="#A0A0A8"/><rect x="2" y="2" width="1" height="1" fill="#A0A0A8"/><rect x="0" y="4" width="1" height="1" fill="#A0A0A8"/><rect x="4" y="4" width="1" height="1" fill="#A0A0A8"/><rect x="2" y="6" width="1" height="1" fill="#A0A0A8"/><rect x="0" y="8" width="1" height="1" fill="#A0A0A8"/><rect x="4" y="8" width="1" height="1" fill="#A0A0A8"/><rect x="2" y="10" width="1" height="1" fill="#A0A0A8"/><rect x="0" y="12" width="1" height="1" fill="#A0A0A8"/><rect x="4" y="12" width="1" height="1" fill="#A0A0A8"/><rect x="2" y="14" width="1" height="1" fill="#A0A0A8"/><rect x="0" y="16" width="1" height="1" fill="#A0A0A8"/><rect x="4" y="16" width="1" height="1" fill="#A0A0A8"/></svg>
<div class="t" style="left:27px;top:81px;">WebApp.src</div>
<svg class="a" style="left:99px;top:85px;" width="7" height="4" viewBox="0 0 7 4"><path d="M0 0H7L3.5 4Z" fill="#707070"/></svg>
<svg class="a" style="left:115px;top:80px;" width="16" height="16" viewBox="0 0 16 16"><path d="M0.5 7V14.5H14.5V7" fill="none" stroke="#333337" stroke-width="1.2"/><path d="M7.5 0V6" stroke="#333337" stroke-width="1.6"/><path d="M4 4L7.5 7.5L11 4" fill="none" stroke="#333337" stroke-width="1.6"/><path d="M3 10h1M6 10h1M9 10h1M12 10h1M4.5 12.5h1M7.5 12.5h1M10.5 12.5h1" stroke="#333337" stroke-width="1.4"/></svg>
<svg class="a" style="left:138px;top:80px;" width="16" height="16" viewBox="0 0 16 16"><circle cx="7.5" cy="7.5" r="7" fill="#3DAA3D"/><path d="M5.5 3.8L11.2 7.5L5.5 11.2Z" fill="#fff"/></svg>
<svg class="a" style="left:160px;top:80px;" width="16" height="16" viewBox="0 0 16 16"><circle cx="7.5" cy="7.5" r="7" fill="#808080"/><rect x="4.8" y="4.2" width="2" height="6.6" fill="#fff"/><rect x="8.3" y="4.2" width="2" height="6.6" fill="#fff"/></svg>
<svg class="a" style="left:184px;top:80px;" width="16" height="16" viewBox="0 0 16 16"><rect x="0" y="2" width="2.5" height="11" fill="#A6A6A6"/><path d="M4.5 2L11.5 7.5L4.5 13Z" fill="#A6A6A6"/></svg>
<svg class="a" style="left:210px;top:80px;" width="16" height="16" viewBox="0 0 16 16"><path d="M1.5 5.5C3 1 10 0.5 11.5 5" fill="none" stroke="#808080" stroke-width="1.6"/><path d="M8.5 3.5L13 2.5L12 7Z" fill="#808080"/><circle cx="6.5" cy="12" r="2" fill="#808080"/></svg>
<svg class="a" style="left:233px;top:80px;" width="16" height="16" viewBox="0 0 16 16"><path d="M4.5 0V6" stroke="#808080" stroke-width="1.6"/><path d="M1.5 4.5L4.5 8.5L7.5 4.5Z" fill="#808080"/><circle cx="4.5" cy="12.5" r="2" fill="#808080"/></svg>
<svg class="a" style="left:255px;top:80px;" width="16" height="16" viewBox="0 0 16 16"><path d="M4.5 9V3" stroke="#808080" stroke-width="1.6"/><path d="M1.5 4.5L4.5 0.5L7.5 4.5Z" fill="#808080"/><circle cx="4.5" cy="12.5" r="2" fill="#808080"/></svg>
<svg class="a" style="left:277px;top:80px;" width="16" height="16" viewBox="0 0 16 16"><path d="M0.5 2.5L7.5 7.5L0.5 12.5Z" fill="#A6A6A6"/><path d="M9.5 1.5h4M11.5 1.5v11M9.5 12.5h4" stroke="#808080" stroke-width="1"/></svg>
<svg class="a" style="left:298px;top:80px;" width="16" height="16" viewBox="0 0 16 16"><path d="M4 3C4 0.5 7.5 0.5 7.5 3" fill="none" stroke="#808080" stroke-width="1.3"/><path d="M2 2.5L4 5.5L6 2.5" fill="none" stroke="#808080" stroke-width="1.3"/><path d="M8 7.5v7M11.5 7.5v7M6 9.5h8M6 12.5h8" stroke="#808080" stroke-width="1.3"/></svg>
<svg class="a" style="left:325px;top:80px;" width="16" height="16" viewBox="0 0 16 16"><path d="M2 6C2 1 9 0.5 10 4.5" fill="none" stroke="#808080" stroke-width="1.5"/><path d="M7 3.5L11 1.5L11 6Z" fill="#808080"/><path d="M2 6L6 9.5" stroke="#808080" stroke-width="1.5"/><path d="M8 9.5L12 12.5L8 15.5Z" fill="#A6A6A6"/></svg>
<svg class="a" style="left:347px;top:80px;" width="16" height="16" viewBox="0 0 16 16"><circle cx="7.5" cy="7.5" r="6.5" fill="none" stroke="#808080" stroke-width="1"/><rect x="4.5" y="4.5" width="6" height="6" fill="#808080"/></svg>
<svg class="a" style="left:885px;top:80px;" width="16" height="16" viewBox="0 0 16 16"><rect x="0.5" y="0.5" width="8" height="10" fill="#fff" stroke="#333337"/><path d="M2 3h5M2 5h5M2 7h5" stroke="#333337"/><rect x="6.5" y="6.5" width="9" height="9" fill="#fff" stroke="#333337" stroke-width="1.2"/><path d="M8 9.5h1M10.5 9.5h3.5M8 12.5h1M10.5 12.5h3.5" stroke="#333337" stroke-width="1.3"/></svg>
<svg class="a" style="left:913px;top:80px;" width="16" height="16" viewBox="0 0 16 16"><rect x="0.5" y="1" width="14" height="13" fill="#F5E9E4" stroke="#333337" stroke-width="1.2"/><rect x="0" y="0.5" width="15" height="2" fill="#333337"/><text x="7.5" y="12" text-anchor="middle" font-family="Liberation Sans" font-weight="bold" font-size="8.5" fill="#D9542B">DF</text></svg>
<svg class="a" style="left:935px;top:80px;" width="16" height="16" viewBox="0 0 16 16"><rect x="0.5" y="1" width="14" height="13" fill="#F4EEDF" stroke="#333337" stroke-width="1.2"/><rect x="0" y="0.5" width="15" height="2" fill="#333337"/><path d="M3 7l2-2 2 2-2 2z M8 10l2-2 2 2-2 2z" fill="#C89B3C"/></svg>
<svg class="a" style="left:957px;top:80px;" width="16" height="16" viewBox="0 0 16 16"><path d="M9 1.5h6V10a3 1.5 0 0 1-6 0Z" fill="#333337"/><ellipse cx="12" cy="1.8" rx="3" ry="1.3" fill="#777"/><rect x="3.5" y="6" width="3" height="3" fill="#333337"/><path d="M5 9v2.5M1.5 14v-2.5h7V14" fill="none" stroke="#333337" stroke-width="1.2"/><rect x="0" y="13" width="3" height="2.5" fill="#333337"/><rect x="7" y="13" width="3" height="2.5" fill="#333337"/></svg>
<svg class="a" style="left:979px;top:80px;" width="16" height="16" viewBox="0 0 16 16"><rect x="4.5" y="0.5" width="11" height="14" fill="#fff" stroke="#333337" stroke-width="1.1"/><path d="M6.5 3h2M9.5 3h4M6.5 5.5h2M9.5 5.5h4M6.5 8h2M9.5 8h4M6.5 10.5h2M9.5 10.5h4M6.5 13h2M9.5 13h4" stroke="#333337" stroke-width="1.1"/><path d="M2.5 7v8" stroke="#333337" stroke-width="2"/><path d="M0.5 9.5h4V12h-4z" fill="#333337"/></svg>
<svg class="a" style="left:1001px;top:80px;" width="16" height="16" viewBox="0 0 16 16"><path d="M8 0.5C3 0.5 0 4 0 8C0 12.5 4 15.5 8.5 15.5C11 15.5 10 12 12 11.5C14 11 16 11.5 16 9C16 8 15 7 13 7C11 7 11 5 13 4C15 3 12 0.5 8 0.5Z" fill="#333337"/><circle cx="4" cy="6" r="1" fill="#ddd"/><circle cx="7" cy="3.5" r="1" fill="#ddd"/><circle cx="3.5" cy="10" r="1" fill="#ddd"/><circle cx="6.5" cy="12.5" r="1" fill="#ddd"/></svg>
<svg class="a" style="left:1022px;top:80px;" width="16" height="16" viewBox="0 0 16 16"><path d="M4.5 0.5H15.5V10M2.5 2.5H13.5V6" fill="none" stroke="#333337" stroke-width="1.1"/><rect x="0" y="6" width="11" height="9.5" fill="#333337"/><path d="M0 9h11M0 12.3h11M3.7 6v9.5M7.3 6v9.5" stroke="#fff" stroke-width="0.9"/><circle cx="11" cy="9" r="2.8" fill="#fff" stroke="#333337" stroke-width="1.3"/><path d="M13 11L15.5 13.5" stroke="#333337" stroke-width="1.6"/></svg>
<svg class="a" style="left:1052px;top:80px;" width="16" height="16" viewBox="0 0 16 16"><path d="M5.5 0.5H11L14.5 4V13.5H9" fill="#fff" stroke="#333337" stroke-width="1.2"/><path d="M10.5 0.5L14.8 4.5H10.5Z" fill="#333337"/><rect x="0" y="8" width="9" height="7" fill="#333337"/><path d="M2.5 10l-1 1.5 1 1.5M6.5 10l1 1.5-1 1.5" fill="none" stroke="#fff" stroke-width="1"/></svg>
<svg class="a" style="left:1097px;top:80px;" width="16" height="16" viewBox="0 0 16 16"><rect x="3.5" y="1.5" width="11" height="10" fill="#fff" stroke="#333337" stroke-width="1.2"/><rect x="3" y="1" width="12" height="2" fill="#333337"/><circle cx="5" cy="11" r="4.3" fill="#D00000"/></svg>
<svg class="a" style="left:1119px;top:80px;" width="16" height="16" viewBox="0 0 16 16"><path d="M3.5 0.5H14.5V9M1.5 2.5H12.5V4" fill="none" stroke="#333337" stroke-width="1"/><rect x="0.5" y="4.5" width="11" height="9" fill="#fff" stroke="#333337" stroke-width="1.2"/><path d="M0.5 4.5L6 9.5L11.5 4.5" fill="none" stroke="#333337" stroke-width="1.1"/><circle cx="10" cy="13.5" r="1.8" fill="#fff" stroke="#333337"/><circle cx="14" cy="13.5" r="1.8" fill="#fff" stroke="#333337"/></svg>
<svg class="a" style="left:1147px;top:80px;" width="16" height="16" viewBox="0 0 16 16"><path d="M2.5 0.5H0.5V8.5H2.5M12.5 0.5H14.5V8.5H12.5" fill="none" stroke="#808080" stroke-width="1"/><path d="M3.5 3L8 1L12 3V6L8 8L3.5 6Z" fill="#808080"/><circle cx="5.5" cy="13.5" r="1.8" fill="none" stroke="#808080"/><circle cx="9.5" cy="13.5" r="1.8" fill="none" stroke="#808080"/><path d="M5 11L7.5 9L10 11" fill="none" stroke="#808080"/></svg>
<svg class="a" style="left:1169px;top:80px;" width="16" height="16" viewBox="0 0 16 16"><path d="M2.5 0.5H0.5V8.5H2.5M12.5 0.5H14.5V8.5H12.5" fill="none" stroke="#808080" stroke-width="1"/><circle cx="7.5" cy="4.5" r="3.8" fill="none" stroke="#808080"/><path d="M3.7 4.5h7.6M7.5 0.7v7.6M5.5 1.3v6.4M9.5 1.3v6.4M4 2.8h7M4 6.2h7" stroke="#808080" stroke-width="0.8"/><circle cx="5.5" cy="13.5" r="1.8" fill="none" stroke="#808080"/><circle cx="9.5" cy="13.5" r="1.8" fill="none" stroke="#808080"/><path d="M5 11L7.5 9L10 11" fill="none" stroke="#808080"/></svg>
<svg class="a" style="left:1191px;top:80px;" width="16" height="16" viewBox="0 0 16 16"><circle cx="3.5" cy="10" r="3" fill="none" stroke="#808080" stroke-width="1.3"/><circle cx="12.5" cy="10" r="3" fill="none" stroke="#808080" stroke-width="1.3"/><path d="M6.5 10h3M0.5 9L3 5M15.5 9L13 5" fill="none" stroke="#808080" stroke-width="1.2"/></svg>
<svg class="a" style="left:1213px;top:80px;" width="16" height="16" viewBox="0 0 16 16"><rect x="2" y="0" width="13" height="3" fill="#808080"/><path d="M2.5 3V12.5H14.5V3M2.5 6.5h12M2.5 9.5h12M6.5 3v9.5M10.5 3v9.5" fill="none" stroke="#808080"/><circle cx="4" cy="13.5" r="1.8" fill="#EEEEF2" stroke="#808080"/><circle cx="8" cy="13.5" r="1.8" fill="#EEEEF2" stroke="#808080"/></svg>
<svg class="a" style="left:1241px;top:80px;" width="16" height="16" viewBox="0 0 16 16"><rect x="3" y="1" width="12" height="2.5" fill="#808080"/><rect x="5" y="6" width="10" height="2.5" fill="#808080"/><rect x="5" y="11" width="10" height="2.5" fill="#808080"/><path d="M3.5 5.5C1.5 5.5 1.5 12.5 3.5 12.5" fill="none" stroke="#808080" stroke-width="1.4"/></svg>
<svg class="a" style="left:1288px;top:80px;" width="16" height="16" viewBox="0 0 16 16"><path d="M0.5 5h7v9a3.5 1.5 0 0 1-7 0Z" fill="#333337"/><ellipse cx="4" cy="5" rx="3.5" ry="1.3" fill="#666"/><rect x="2" y="0.5" width="13" height="2.5" fill="#333337"/><path d="M8.5 3v11.5h6.5V3M8.5 7h6.5M8.5 10.5h6.5" fill="none" stroke="#333337" stroke-width="1.3"/><path d="M11.5 5h3M11.5 9h3M11.5 12.5h3" stroke="#333337" stroke-width="1.5"/></svg>
<svg class="a" style="left:1310px;top:80px;" width="16" height="16" viewBox="0 0 16 16"><path d="M0.5 6h7v8a3.5 1.5 0 0 1-7 0Z" fill="#333337"/><ellipse cx="4" cy="6" rx="3.5" ry="1.3" fill="#666"/><g fill="#333337"><rect x="4" y="0" width="3" height="3"/><rect x="8" y="0" width="3" height="3"/><rect x="12" y="0" width="3" height="3"/><rect x="8" y="4" width="3" height="3"/><rect x="12" y="4" width="3" height="3"/><rect x="8" y="8" width="3" height="3"/><rect x="12" y="8" width="3" height="3"/><rect x="12" y="12" width="3" height="3"/></g></svg>
<svg class="a" style="left:1331px;top:80px;" width="16" height="16" viewBox="0 0 16 16"><circle cx="11" cy="5" r="4.5" fill="#fff" stroke="#333337" stroke-width="1.1"/><path d="M6.5 5h9M11 0.5v9M8.5 1.3v7.4M13.5 1.3v7.4" stroke="#333337" stroke-width="0.8"/><circle cx="4" cy="7" r="3" fill="#333337"/><path d="M0 15.5V12.5C0 10.5 8 10.5 8 12.5V15.5Z" fill="#333337"/></svg>
<div class="a" style="left:108px;top:79px;width:1px;height:20px;background:#CCCCD0;"></div>
<div class="a" style="left:202px;top:79px;width:1px;height:20px;background:#CCCCD0;"></div>
<div class="a" style="left:318px;top:79px;width:1px;height:20px;background:#CCCCD0;"></div>
<div class="a" style="left:906px;top:79px;width:1px;height:20px;background:#CCCCD0;"></div>
<div class="a" style="left:1045px;top:79px;width:1px;height:20px;background:#CCCCD0;"></div>
<div class="a" style="left:1140px;top:79px;width:1px;height:20px;background:#CCCCD0;"></div>
<div class="a" style="left:1234px;top:79px;width:1px;height:20px;background:#CCCCD0;"></div>
<svg class="a" style="left:447px;top:80px;" width="5" height="18" viewBox="0 0 5 18"><rect x="0" y="0" width="1" height="1" fill="#A0A0A8"/><rect x="4" y="0" width="1" height="1" fill="#A0A0A8"/><rect x="2" y="2" width="1" height="1" fill="#A0A0A8"/><rect x="0" y="4" width="1" height="1" fill="#A0A0A8"/><rect x="4" y="4" width="1" height="1" fill="#A0A0A8"/><rect x="2" y="6" width="1" height="1" fill="#A0A0A8"/><rect x="0" y="8" width="1" height="1" fill="#A0A0A8"/><rect x="4" y="8" width="1" height="1" fill="#A0A0A8"/><rect x="2" y="10" width="1" height="1" fill="#A0A0A8"/><rect x="0" y="12" width="1" height="1" fill="#A0A0A8"/><rect x="4" y="12" width="1" height="1" fill="#A0A0A8"/><rect x="2" y="14" width="1" height="1" fill="#A0A0A8"/><rect x="0" y="16" width="1" height="1" fill="#A0A0A8"/><rect x="4" y="16" width="1" height="1" fill="#A0A0A8"/></svg>
<svg class="a" style="left:870px;top:80px;" width="5" height="18" viewBox="0 0 5 18"><rect x="0" y="0" width="1" height="1" fill="#A0A0A8"/><rect x="4" y="0" width="1" height="1" fill="#A0A0A8"/><rect x="2" y="2" width="1" height="1" fill="#A0A0A8"/><rect x="0" y="4" width="1" height="1" fill="#A0A0A8"/><rect x="4" y="4" width="1" height="1" fill="#A0A0A8"/><rect x="2" y="6" width="1" height="1" fill="#A0A0A8"/><rect x="0" y="8" width="1" height="1" fill="#A0A0A8"/><rect x="4" y="8" width="1" height="1" fill="#A0A0A8"/><rect x="2" y="10" width="1" height="1" fill="#A0A0A8"/><rect x="0" y="12" width="1" height="1" fill="#A0A0A8"/><rect x="4" y="12" width="1" height="1" fill="#A0A0A8"/><rect x="2" y="14" width="1" height="1" fill="#A0A0A8"/><rect x="0" y="16" width="1" height="1" fill="#A0A0A8"/><rect x="4" y="16" width="1" height="1" fill="#A0A0A8"/></svg>
<svg class="a" style="left:1082px;top:80px;" width="5" height="18" viewBox="0 0 5 18"><rect x="0" y="0" width="1" height="1" fill="#A0A0A8"/><rect x="4" y="0" width="1" height="1" fill="#A0A0A8"/><rect x="2" y="2" width="1" height="1" fill="#A0A0A8"/><rect x="0" y="4" width="1" height="1" fill="#A0A0A8"/><rect x="4" y="4" width="1" height="1" fill="#A0A0A8"/><rect x="2" y="6" width="1" height="1" fill="#A0A0A8"/><rect x="0" y="8" width="1" height="1" fill="#A0A0A8"/><rect x="4" y="8" width="1" height="1" fill="#A0A0A8"/><rect x="2" y="10" width="1" height="1" fill="#A0A0A8"/><rect x="0" y="12" width="1" height="1" fill="#A0A0A8"/><rect x="4" y="12" width="1" height="1" fill="#A0A0A8"/><rect x="2" y="14" width="1" height="1" fill="#A0A0A8"/><rect x="0" y="16" width="1" height="1" fill="#A0A0A8"/><rect x="4" y="16" width="1" height="1" fill="#A0A0A8"/></svg>
<svg class="a" style="left:1274px;top:80px;" width="5" height="18" viewBox="0 0 5 18"><rect x="0" y="0" width="1" height="1" fill="#A0A0A8"/><rect x="4" y="0" width="1" height="1" fill="#A0A0A8"/><rect x="2" y="2" width="1" height="1" fill="#A0A0A8"/><rect x="0" y="4" width="1" height="1" fill="#A0A0A8"/><rect x="4" y="4" width="1" height="1" fill="#A0A0A8"/><rect x="2" y="6" width="1" height="1" fill="#A0A0A8"/><rect x="0" y="8" width="1" height="1" fill="#A0A0A8"/><rect x="4" y="8" width="1" height="1" fill="#A0A0A8"/><rect x="2" y="10" width="1" height="1" fill="#A0A0A8"/><rect x="0" y="12" width="1" height="1" fill="#A0A0A8"/><rect x="4" y="12" width="1" height="1" fill="#A0A0A8"/><rect x="2" y="14" width="1" height="1" fill="#A0A0A8"/><rect x="0" y="16" width="1" height="1" fill="#A0A0A8"/><rect x="4" y="16" width="1" height="1" fill="#A0A0A8"/></svg>
<div class="a" style="left:458px;top:77px;width:400px;height:22px;background:#FCFCFC;border:1px solid #DADADE"></div>
<div class="t" style="left:463px;top:81px;color:#707070">Type file to open</div>
<svg class="a" style="left:281px;top:107px;" width="7" height="10" viewBox="0 0 7 10"><path d="M1.5 0V6.5M4.5 0V6.5" stroke="#111" stroke-width="1.3"/><path d="M0 6.8H6.5" stroke="#111" stroke-width="1.7"/><path d="M3 7.5V9.5" stroke="#777" stroke-width="1"/></svg>
<svg class="a" style="left:298px;top:108px;" width="7" height="7" viewBox="0 0 7 7"><path d="M0.5 0.5L6.5 6.5M6.5 0.5L0.5 6.5" stroke="#1E1E1E" stroke-width="1.3"/></svg>
<svg class="a" style="left:281px;top:777px;" width="7" height="10" viewBox="0 0 7 10"><path d="M1.5 0V6.5M4.5 0V6.5" stroke="#111" stroke-width="1.3"/><path d="M0 6.8H6.5" stroke="#111" stroke-width="1.7"/><path d="M3 7.5V9.5" stroke="#777" stroke-width="1"/></svg>
<svg class="a" style="left:298px;top:778px;" width="7" height="7" viewBox="0 0 7 7"><path d="M0.5 0.5L6.5 6.5M6.5 0.5L0.5 6.5" stroke="#1E1E1E" stroke-width="1.3"/></svg>
<svg class="a" style="left:1598px;top:833px;" width="7" height="10" viewBox="0 0 7 10"><path d="M1.5 0V6.5M4.5 0V6.5" stroke="#111" stroke-width="1.3"/><path d="M0 6.8H6.5" stroke="#111" stroke-width="1.7"/><path d="M3 7.5V9.5" stroke="#777" stroke-width="1"/></svg>
<svg class="a" style="left:1615px;top:834px;" width="7" height="7" viewBox="0 0 7 7"><path d="M0.5 0.5L6.5 6.5M6.5 0.5L0.5 6.5" stroke="#1E1E1E" stroke-width="1.3"/></svg>
<svg class="a" style="left:1891px;top:107px;" width="7" height="10" viewBox="0 0 7 10"><path d="M1.5 0V6.5M4.5 0V6.5" stroke="#111" stroke-width="1.3"/><path d="M0 6.8H6.5" stroke="#111" stroke-width="1.7"/><path d="M3 7.5V9.5" stroke="#777" stroke-width="1"/></svg>
<svg class="a" style="left:1908px;top:108px;" width="7" height="7" viewBox="0 0 7 7"><path d="M0.5 0.5L6.5 6.5M6.5 0.5L0.5 6.5" stroke="#1E1E1E" stroke-width="1.3"/></svg>
<svg class="a" style="left:1891px;top:472px;" width="7" height="10" viewBox="0 0 7 10"><path d="M1.5 0V6.5M4.5 0V6.5" stroke="#111" stroke-width="1.3"/><path d="M0 6.8H6.5" stroke="#111" stroke-width="1.7"/><path d="M3 7.5V9.5" stroke="#777" stroke-width="1"/></svg>
<svg class="a" style="left:1908px;top:473px;" width="7" height="7" viewBox="0 0 7 7"><path d="M0.5 0.5L6.5 6.5M6.5 0.5L0.5 6.5" stroke="#1E1E1E" stroke-width="1.3"/></svg>
<svg class="a" style="left:5px;top:127px;" width="16" height="16" viewBox="0 0 16 16"><path d="M9.5 1L14.5 3.8V10.2L9.5 13L4.5 10.2V3.8Z M4.5 3.8L9.5 6.6L14.5 3.8 M9.5 6.6V13" fill="none" stroke="#333337" stroke-width="0.9"/><path d="M4 14V7" stroke="#1F5B9C" stroke-width="2.4"/><path d="M0.5 8L4 4L7.5 8Z" fill="#1F5B9C"/><rect x="2.8" y="13" width="2.4" height="2" fill="#1F5B9C"/></svg>
<svg class="a" style="left:27px;top:127px;" width="16" height="16" viewBox="0 0 16 16"><path d="M9.5 1L14.5 3.8V10.2L9.5 13L4.5 10.2V3.8Z M4.5 3.8L9.5 6.6L14.5 3.8 M9.5 6.6V13" fill="none" stroke="#808080" stroke-width="0.9"/><path d="M3.5 4V10" stroke="#808080" stroke-width="2.4"/><path d="M0 9L3.5 13L7 9Z" fill="#808080"/><rect x="2.3" y="2" width="2.4" height="1.6" fill="#808080"/></svg>
<svg class="a" style="left:55px;top:127px;" width="16" height="16" viewBox="0 0 16 16"><path d="M1 11L6 6A3 3 0 0 1 10 1.5L8 3.5L9.5 5L11.5 3A3 3 0 0 1 7.5 7.5L2.5 12.5Z" fill="#808080"/><circle cx="11.5" cy="11.5" r="4.3" fill="#808080"/><path d="M8.2 10.3h6.6M8.2 12.7h6.6M10.3 8.2v6.6M12.7 8.2v6.6" stroke="#fff" stroke-width="0.9"/></svg>
<svg class="a" style="left:77px;top:127px;" width="16" height="16" viewBox="0 0 16 16"><text x="0" y="8" font-family="Liberation Serif" font-style="italic" font-size="9" fill="#808080">fx</text><circle cx="11.5" cy="11.5" r="4.3" fill="#808080"/><path d="M8.2 10.3h6.6M8.2 12.7h6.6M10.3 8.2v6.6M12.7 8.2v6.6" stroke="#fff" stroke-width="0.9"/></svg>
<div class="a" style="left:48px;top:125px;width:1px;height:24px;background:#CCCCD0;"></div>
<svg class="a" style="left:320px;top:853px;" width="16" height="16" viewBox="0 0 16 16"><circle cx="10.5" cy="9" r="3.3" fill="none" stroke="#333337" stroke-width="1.4"/><path d="M8.2 11.3L4.5 15" stroke="#333337" stroke-width="1.8"/><path d="M2 3.5h6.5" stroke="#1F5B9C" stroke-width="1.8"/><path d="M0 3.5L3.5 0.5V6.5Z" fill="#1F5B9C"/><path d="M8.5 3.5V6" stroke="#1F5B9C" stroke-width="1"/></svg>
<svg class="a" style="left:342px;top:853px;" width="16" height="16" viewBox="0 0 16 16"><circle cx="10.5" cy="9" r="3.3" fill="none" stroke="#333337" stroke-width="1.4"/><path d="M8.2 11.3L4.5 15" stroke="#333337" stroke-width="1.8"/><path d="M0 3.5h6.5" stroke="#1F5B9C" stroke-width="1.8"/><path d="M9 3.5L5.5 0.5V6.5Z" fill="#1F5B9C"/><path d="M1 3.5V6" stroke="#1F5B9C" stroke-width="1"/></svg>
<svg class="a" style="left:370px;top:853px;" width="16" height="16" viewBox="0 0 16 16"><g fill="#fff" stroke="#333337" stroke-width="1.1"><path d="M5.5 0.5H10L12.5 3V10.5H5.5Z"/><path d="M1.5 4.5H6L8.5 7V14.5H1.5Z"/></g></svg>
<svg class="a" style="left:391px;top:853px;" width="16" height="16" viewBox="0 0 16 16"><path d="M1.5 1.5L13.5 13.5M13.5 1.5L1.5 13.5" stroke="#A61B1B" stroke-width="2.4"/></svg>
<svg class="a" style="left:419px;top:853px;" width="16" height="16" viewBox="0 0 16 16"><path d="M0.5 7V0.5H8M2.5 9V2.5H10" fill="none" stroke="#333337" stroke-width="1.1"/><rect x="4.5" y="4.5" width="9" height="9" fill="#fff" stroke="#333337" stroke-width="1.3"/><path d="M6.5 9h5" stroke="#1F5B9C" stroke-width="1.5"/><path d="M9 6.5v5" stroke="#1F5B9C" stroke-width="1.5"/></svg>
<svg class="a" style="left:441px;top:853px;" width="16" height="16" viewBox="0 0 16 16"><path d="M0.5 7V0.5H8M2.5 9V2.5H10" fill="none" stroke="#333337" stroke-width="1.1"/><rect x="4.5" y="4.5" width="9" height="9" fill="#fff" stroke="#333337" stroke-width="1.3"/><path d="M6.5 9h5" stroke="#1F5B9C" stroke-width="1.5"/></svg>
<div class="a" style="left:362px;top:851px;width:1px;height:20px;background:#CCCCD0;"></div>
<div class="a" style="left:412px;top:851px;width:1px;height:20px;background:#CCCCD0;"></div>
<svg class="a" style="left:1636px;top:492px;" width="16" height="16" viewBox="0 0 16 16"><path d="M0.5 5.5V13.5H6.5V5.5Z M7.5 3.5H13.5V13.5H7.5" fill="#fff" stroke="#333337" stroke-width="1.1"/><path d="M3 0v5M0.5 2.5h5" stroke="#3A9A3A" stroke-width="1.8"/><rect x="6" y="12" width="2" height="3" fill="#333337"/></svg>
<svg class="a" style="left:1658px;top:492px;" width="16" height="16" viewBox="0 0 16 16"><path d="M0.5 7h6v6a3 1.2 0 0 1-6 0Z" fill="#808080"/><ellipse cx="3.5" cy="7" rx="3" ry="1" fill="#aaa"/><rect x="7.5" y="0.5" width="3" height="3" fill="#fff" stroke="#808080"/><rect x="11" y="0.5" width="3" height="3" fill="#fff" stroke="#808080"/><path d="M5 1.5H2.5V5M12.5 8V12.5H9.5" fill="none" stroke="#808080" stroke-width="1.2"/><path d="M1 4l1.5 2 1.5-2M10.5 11l-1.5 1.5 1.5 1.5" fill="none" stroke="#808080"/></svg>
<svg class="a" style="left:1680px;top:492px;" width="16" height="16" viewBox="0 0 16 16"><path d="M1.5 1.5H7V10H1.5Z M8 0.5H14V9.5H9" fill="#fff" stroke="#808080" stroke-width="1.2"/><circle cx="4" cy="11" r="3.7" fill="#808080"/><path d="M2 12.8V10h4v2.8M4 10v2.8" fill="none" stroke="#fff" stroke-width="0.9"/></svg>
<svg class="a" style="left:1709px;top:492px;" width="16" height="16" viewBox="0 0 16 16"><path d="M0.5 3.5H6.5V13.5H0.5Z M7.5 3.5H13.5V13.5H7.5Z" fill="#fff" stroke="#A6A6A6" stroke-width="1.1"/><rect x="1" y="1" width="5" height="1.5" fill="#A6A6A6"/></svg>
<svg class="a" style="left:1730px;top:492px;" width="16" height="16" viewBox="0 0 16 16"><rect x="5.5" y="0.5" width="4" height="3" fill="#fff" stroke="#333337" stroke-width="1.1"/><path d="M7.5 3.5V6M3 8.5V6H12V8.5" fill="none" stroke="#333337" stroke-width="1.1"/><rect x="0.5" y="9" width="5" height="4" fill="#fff" stroke="#333337" stroke-width="1.3"/><rect x="8.5" y="9" width="5" height="4" fill="#fff" stroke="#333337" stroke-width="1.3"/><path d="M0.5 0.5L4 4M4 0.5L0.5 4" stroke="#D02020" stroke-width="1.1"/></svg>
<svg class="a" style="left:1759px;top:492px;" width="16" height="16" viewBox="0 0 16 16"><rect x="7.5" y="0.5" width="6" height="4" fill="#fff" stroke="#808080" stroke-width="1.1"/><rect x="1" y="9.5" width="6" height="4" fill="#fff" stroke="#808080" stroke-width="1.1"/><path d="M10.5 4.5V7.5H7" fill="none" stroke="#808080"/><path d="M0 3h5" stroke="#808080" stroke-width="1.5"/><path d="M2.5 0.5v5" stroke="#808080" stroke-width="1.5"/></svg>
<svg class="a" style="left:1781px;top:492px;" width="16" height="16" viewBox="0 0 16 16"><rect x="7.5" y="0.5" width="6" height="4" fill="#fff" stroke="#808080" stroke-width="1.1"/><rect x="1" y="9.5" width="6" height="4" fill="#fff" stroke="#808080" stroke-width="1.1"/><path d="M10.5 4.5V7.5H7" fill="none" stroke="#808080"/><path d="M0 3h5" stroke="#808080" stroke-width="1.5"/></svg>
<div class="a" style="left:1701px;top:490px;width:1px;height:22px;background:#CCCCD0;"></div>
<div class="a" style="left:1751px;top:490px;width:1px;height:22px;background:#CCCCD0;"></div>
<svg class="a" style="left:1572px;top:107px;" width="6" height="9" viewBox="0 0 6 9"><path d="M5.5 0.5V8.5L0.5 4.5Z" fill="none" stroke="#A0A0A0"/></svg>
<svg class="a" style="left:1587px;top:107px;" width="6" height="9" viewBox="0 0 6 9"><path d="M0.5 0.5V8.5L5.5 4.5Z" fill="none" stroke="#A0A0A0"/></svg>
<svg class="a" style="left:1599px;top:110px;" width="7" height="4" viewBox="0 0 7 4"><path d="M0 0H7L3.5 4Z" fill="#5A5A5A"/></svg>
<svg class="a" style="left:1612px;top:107px;" width="10" height="10" viewBox="0 0 10 10"><path d="M0.5 0.5L9.5 9.5M9.5 0.5L0.5 9.5" stroke="#5A5A5A" stroke-width="1.4"/></svg>
<svg class="a" style="left:626px;top:109px;" width="8" height="8" viewBox="0 0 8 8"><path d="M0.5 0.5L7.5 7.5M7.5 0.5L0.5 7.5" stroke="#fff" stroke-width="2"/></svg>
<svg class="a" style="left:1613px;top:137px;" width="8" height="5" viewBox="0 0 8 5"><path d="M0.8 4.2L4.0 0.8L7.2 4.2" fill="none" stroke="#5A5A5A" stroke-width="1.6"/></svg>
<svg class="a" style="left:1613px;top:794px;" width="8" height="5" viewBox="0 0 8 5"><path d="M0.8 0.8L4.0 4.2L7.2 0.8" fill="none" stroke="#5A5A5A" stroke-width="1.6"/></svg>
<svg class="a" style="left:329px;top:810px;" width="5" height="8" viewBox="0 0 5 8"><path d="M4.2 0.8L0.8 4.0L4.2 7.2" fill="none" stroke="#5A5A5A" stroke-width="1.6"/></svg>
<svg class="a" style="left:1596px;top:810px;" width="5" height="8" viewBox="0 0 5 8"><path d="M0.8 0.8L4.2 4.0L0.8 7.2" fill="none" stroke="#5A5A5A" stroke-width="1.6"/></svg>
<svg class="a" style="left:1613px;top:880px;" width="8" height="5" viewBox="0 0 8 5"><path d="M0.8 4.2L4.0 0.8L7.2 4.2" fill="none" stroke="#5A5A5A" stroke-width="1.6"/></svg>
<svg class="a" style="left:1613px;top:980px;" width="8" height="5" viewBox="0 0 8 5"><path d="M0.8 0.8L4.0 4.2L7.2 0.8" fill="none" stroke="#5A5A5A" stroke-width="1.6"/></svg>
<svg class="a" style="left:1903px;top:137px;" width="11" height="6" viewBox="0 0 11 6"><path d="M0.8 0.8L5.5 5.2L10.2 0.8" fill="none" stroke="#404040" stroke-width="1.3"/></svg>
<svg class="a" style="left:314px;top:466px;" width="14" height="21" viewBox="0 0 14 21"><path d="M1.2 1.2V17.5L5 13.8L8 20L10.5 19L7.6 12.8H12.6Z" fill="#fff" stroke="#000" stroke-width="1.1" stroke-linejoin="round"/></svg>
<svg class="a" style="left:2px;top:4px;" width="16" height="16" viewBox="0 0 16 16"><path d="M0 1.5Q0 0 1.5 0H16V11Q16 16 11 16H1.5Q0 16 0 14.5Z" fill="#D8431F"/><text x="7.8" y="11.8" text-anchor="middle" font-family="Liberation Sans" font-weight="bold" font-size="9.5" fill="#fff" letter-spacing="-0.6">DF</text></svg>
<svg class="a" style="left:7px;top:748px;" width="16" height="16" viewBox="0 0 16 16"><path d="M4.5 0.5H15.5V10M2.5 2.5H13.5V6" fill="none" stroke="#333337" stroke-width="1.1"/><rect x="0" y="6" width="11" height="9.5" fill="#333337"/><path d="M0 9h11M0 12.3h11M3.7 6v9.5M7.3 6v9.5" stroke="#fff" stroke-width="0.9"/><circle cx="11" cy="9" r="2.8" fill="#fff" stroke="#333337" stroke-width="1.3"/><path d="M13 11L15.5 13.5" stroke="#333337" stroke-width="1.6"/></svg>
<svg class="a" style="left:106px;top:750px;" width="16" height="16" viewBox="0 0 16 16"><rect x="0.5" y="1" width="14" height="13" fill="#F4EEDF" stroke="#333337" stroke-width="1.2"/><rect x="0" y="0.5" width="15" height="2" fill="#333337"/><path d="M3 7l2-2 2 2-2 2z M8 10l2-2 2 2-2 2z" fill="#C89B3C"/></svg>
<svg class="a" style="left:209px;top:748px;" width="16" height="16" viewBox="0 0 16 16"><path d="M8 0.5C3 0.5 0 4 0 8C0 12.5 4 15.5 8.5 15.5C11 15.5 10 12 12 11.5C14 11 16 11.5 16 9C16 8 15 7 13 7C11 7 11 5 13 4C15 3 12 0.5 8 0.5Z" fill="#333337"/><circle cx="4" cy="6" r="1" fill="#ddd"/><circle cx="7" cy="3.5" r="1" fill="#ddd"/><circle cx="3.5" cy="10" r="1" fill="#ddd"/><circle cx="6.5" cy="12.5" r="1" fill="#ddd"/></svg>
<svg class="a" style="left:319px;top:999px;" width="16" height="16" viewBox="0 0 16 16"><path d="M9 1.5H1.5V14.5H9" fill="none" stroke="#333337" stroke-width="1.3"/><path d="M3.5 8h8" stroke="#333337" stroke-width="2"/><path d="M9.5 4L14.5 8L9.5 12Z" fill="#333337"/></svg>
<svg class="a" style="left:388px;top:999px;" width="16" height="16" viewBox="0 0 16 16"><path d="M2.5 3.5H11.5V14.5H2.5Z" fill="#fff" stroke="#333337" stroke-width="1.3"/><path d="M5 3.5V2A2 2 0 0 1 9 2V3.5" fill="none" stroke="#333337" stroke-width="1.2"/><path d="M4 8.5L6.5 12L11 5" fill="none" stroke="#333337" stroke-width="1.6"/></svg>
<svg class="a" style="left:540px;top:999px;" width="16" height="16" viewBox="0 0 16 16"><path d="M3.5 0.8H11L14.5 4V14.5H8" fill="#fff" stroke="#333337" stroke-width="1.2"/><path d="M10.5 0.5L14.8 4.5H10.5Z" fill="#333337"/><circle cx="6" cy="9.5" r="2.5" fill="none" stroke="#1F5B9C" stroke-width="1.3"/><path d="M4.3 11.3L1 14.5" stroke="#1F5B9C" stroke-width="1.6"/></svg>
<svg class="a" style="left:632px;top:999px;" width="16" height="16" viewBox="0 0 16 16"><rect x="3.5" y="1.5" width="11" height="10" fill="#fff" stroke="#333337" stroke-width="1.2"/><rect x="3" y="1" width="12" height="2" fill="#333337"/><circle cx="5" cy="11" r="4.3" fill="#D00000"/></svg>
<svg class="a" style="left:722px;top:999px;" width="16" height="16" viewBox="0 0 16 16"><rect x="0.5" y="1" width="15" height="13" fill="#fff" stroke="#333337" stroke-width="1.2"/><rect x="0" y="0.5" width="16" height="2" fill="#333337"/><path d="M1.5 12.5L4.5 6.5L7.5 12.5Z" fill="#F4E04A"/><path d="M4.5 8.5v2" stroke="#333337" stroke-width="1.1"/><path d="M8 8.5L10 11L14 4" fill="none" stroke="#333337" stroke-width="1.6"/></svg>
<div class="a" style="left:384px;top:997px;width:1px;height:19px;background:#D6D6DA;"></div>
<div class="a" style="left:536px;top:997px;width:1px;height:19px;background:#D6D6DA;"></div>
<div class="a" style="left:626px;top:997px;width:1px;height:19px;background:#D6D6DA;"></div>
<div class="a" style="left:716px;top:997px;width:1px;height:19px;background:#D6D6DA;"></div>
<div class="a" style="left:921px;top:997px;width:1px;height:19px;background:#D6D6DA;"></div>
<svg class="a" style="left:1638px;top:1000px;" width="16" height="16" viewBox="0 0 16 16"><rect x="4.5" y="0.5" width="11" height="14" fill="#fff" stroke="#333337" stroke-width="1.1"/><path d="M6.5 3h2M9.5 3h4M6.5 5.5h2M9.5 5.5h4M6.5 8h2M9.5 8h4M6.5 10.5h2M9.5 10.5h4M6.5 13h2M9.5 13h4" stroke="#333337" stroke-width="1.1"/><path d="M2.5 7v8" stroke="#333337" stroke-width="2"/><path d="M0.5 9.5h4V12h-4z" fill="#333337"/></svg>
<svg class="a" style="left:1770px;top:1000px;" width="16" height="16" viewBox="0 0 16 16"><path d="M9 1.5h6V10a3 1.5 0 0 1-6 0Z" fill="#333337"/><ellipse cx="12" cy="1.8" rx="3" ry="1.3" fill="#777"/><rect x="3.5" y="6" width="3" height="3" fill="#333337"/><path d="M5 9v2.5M1.5 14v-2.5h7V14" fill="none" stroke="#333337" stroke-width="1.2"/><rect x="0" y="13" width="3" height="2.5" fill="#333337"/><rect x="7" y="13" width="3" height="2.5" fill="#333337"/></svg>
<svg class="a" style="left:1758px;top:1022px;" width="18" height="18" viewBox="0 0 18 18"><circle cx="9" cy="9" r="7.6" fill="#fff" stroke="#CFEFFF" stroke-width="1"/><circle cx="9" cy="9" r="6" fill="#fff" stroke="#8A8A8A" stroke-width="1.6"/><path d="M5 5L13 13" stroke="#8A8A8A" stroke-width="1.8"/></svg>
<svg class="a" style="left:16px;top:1053px;" width="17" height="17" viewBox="0 0 17 17"><g fill="#fff"><path d="M0 2.3L7 1.3V8H0Z"/><path d="M8 1.1L17 0V8H8Z"/><path d="M0 9H7V15.7L0 14.7Z"/><path d="M8 9H17V17L8 15.9Z"/></g></svg>
<svg class="a" style="left:64px;top:1053px;" width="17" height="17" viewBox="0 0 17 17"><circle cx="10.5" cy="6.5" r="5.3" fill="none" stroke="#fff" stroke-width="1.3"/><path d="M6.7 10.3L0.8 16.2" stroke="#fff" stroke-width="1.4"/></svg>
<svg class="a" style="left:111px;top:1053px;" width="19" height="17" viewBox="0 0 19 17"><path d="M0.5 2h1.5M0.5 15h1.5M2.5 4.5V12.5M2.5 4.5H13.5V12.5H2.5M14.5 2h-1.5M14.5 15h-1.5" fill="none" stroke="#fff" stroke-width="1.1"/><rect x="16" y="1" width="1.4" height="2.5" fill="#fff"/><rect x="16" y="5.5" width="1.4" height="6" fill="#fff"/><rect x="16" y="13.5" width="1.4" height="2.5" fill="#fff"/></svg>
<div class="a" style="left:196px;top:1041px;width:48px;height:39px;background:#5A6E96;"></div>
<div class="a" style="left:151px;top:1078px;width:40px;height:2px;background:#A9B8D4;"></div>
<div class="a" style="left:196px;top:1078px;width:48px;height:2px;background:#C2CEE4;"></div>
<svg class="a" style="left:160px;top:1049px;" width="23" height="23" viewBox="0 0 23 23"><circle cx="11.5" cy="11.5" r="11" fill="#DB4437"/><path d="M11.5 11.5L2 17A11 11 0 0 0 17.5 20.7Z" fill="#0F9D58"/><path d="M11.5 11.5L17.5 20.7A11 11 0 0 0 21 6.1Z" fill="#FFCD40"/><circle cx="11.5" cy="11.5" r="5" fill="#fff"/><circle cx="11.5" cy="11.5" r="3.8" fill="#4285F4"/></svg>
<svg class="a" style="left:208px;top:1049px;" width="24" height="24" viewBox="0 0 24 24"><rect x="0" y="0" width="24" height="24" fill="#D8431F"/><text x="12" y="17.5" text-anchor="middle" font-family="Liberation Sans" font-weight="bold" font-size="14" fill="#fff" letter-spacing="-1">DF</text></svg>
<!--ICONS-->
</body></html>
